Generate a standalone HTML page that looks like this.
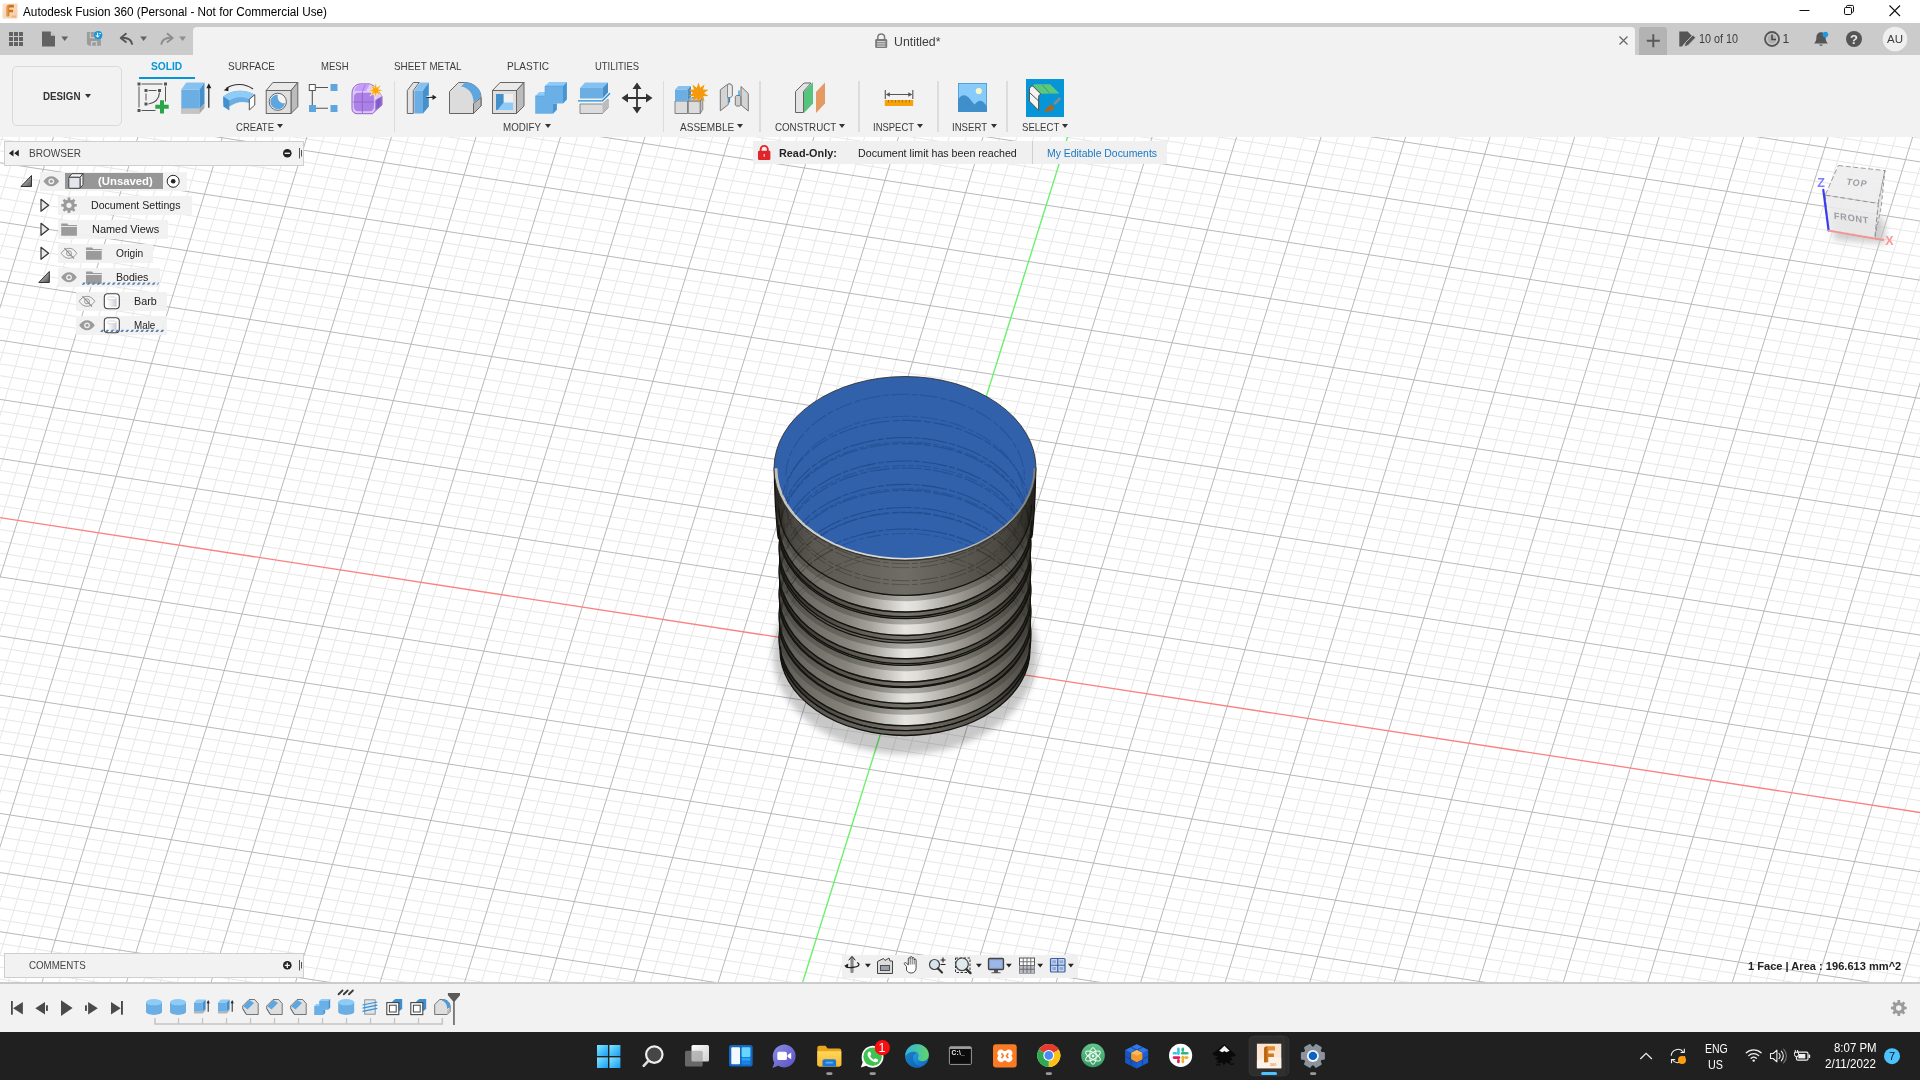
<!DOCTYPE html>
<html lang="en"><head><meta charset="utf-8"><title>Autodesk Fusion 360 (Personal - Not for Commercial Use)</title>
<style>
*{box-sizing:border-box;margin:0;padding:0}
html,body{width:1920px;height:1080px;overflow:hidden;background:#fff}
body{position:relative;font-family:"Liberation Sans",Arial,sans-serif;font-size:11px;color:#3c3c3c}
.abs{position:absolute}
.t{position:absolute;white-space:nowrap;line-height:1;transform-origin:0 50%}
svg{position:absolute;overflow:visible}
#titlebar{left:0;top:0;width:1920px;height:23px;background:#fff}
#tabstrip{left:0;top:23px;width:1920px;height:32px;background:#cbcbcb}
#doctab{left:193px;top:27px;width:1442px;height:28px;background:#f2f2f2;border-radius:4px 4px 0 0}
#toolbar{left:0;top:55px;width:1920px;height:82px;background:#f2f2f2}
#viewport{left:0;top:137px;width:1920px;height:845px;background:#fff;overflow:hidden}
#timeline{left:0;top:982px;width:1920px;height:50px;background:#f2f2f2;border-top:2px solid #cbcbcb}
#taskbar{left:0;top:1032px;width:1920px;height:48px;background:#202020}
.sep{position:absolute;top:81px;width:1.5px;height:51px;background:#dcdcdc}
.tab{font-size:11px;color:#3c3c3c;top:61px}
.grp{font-size:11px;color:#3c3c3c;top:121px}
.dd{position:absolute;width:0;height:0;border-left:3.5px solid transparent;border-right:3.5px solid transparent;border-top:4px solid #333}
.rowbg{position:absolute;height:19px;background:rgba(241,241,241,.92)}
.row{font-size:11px;color:#222}
</style></head>
<body>
<div id="viewport" class="abs">
<svg width="1920" height="846" viewBox="0 137 1920 846" style="left:0;top:0">
<path d="M-558.72 1011.56L2102.09 1420.13M-555.18 1000.27L2105.63 1408.84M-551.64 988.98L2109.17 1397.56M-548.10 977.70L2112.70 1386.27M-541.03 955.12L2119.78 1363.70M-537.49 943.84L2123.32 1352.41M-533.95 932.55L2126.85 1341.12M-530.41 921.26L2130.39 1329.84M-523.34 898.69L2137.47 1307.26M-519.80 887.40L2141.00 1295.98M-516.26 876.12L2144.54 1284.69M-512.73 864.83L2148.08 1273.40M-505.65 842.26L2155.16 1250.83M-502.11 830.97L2158.69 1239.54M-498.58 819.68L2162.23 1228.25M-495.04 808.39L2165.77 1216.97M-487.96 785.82L2172.84 1194.39M-484.43 774.53L2176.38 1183.11M-480.89 763.25L2179.92 1171.82M-477.35 751.96L2183.46 1160.53M-470.28 729.39L2190.53 1137.96M-466.74 718.10L2194.07 1126.67M-463.20 706.81L2197.61 1115.39M-459.66 695.53L2201.14 1104.10M-452.59 672.95L2208.22 1081.53M-449.05 661.67L2211.76 1070.24M-445.51 650.38L2215.29 1058.95M-441.97 639.09L2218.83 1047.67M-434.90 616.52L2225.91 1025.09M-431.36 605.23L2229.44 1013.81M-427.82 593.95L2232.98 1002.52M-424.29 582.66L2236.52 991.23M-417.21 560.09L2243.60 968.66M-413.67 548.80L2247.13 957.37M-410.14 537.51L2250.67 946.08M-406.60 526.22L2254.21 934.80M-399.52 503.65L2261.28 912.22M-395.99 492.36L2264.82 900.94M-392.45 481.08L2268.36 889.65M-388.91 469.79L2271.90 878.36M-381.84 447.22L2278.97 855.79M-378.30 435.93L2282.51 844.50M-374.76 424.64L2286.05 833.22M-371.22 413.36L2289.58 821.93M-364.15 390.78L2296.66 799.36M-360.61 379.50L2300.20 788.07M-357.07 368.21L2303.73 776.78M-353.53 356.92L2307.27 765.50M-346.46 334.35L2314.35 742.92M-342.92 323.06L2317.88 731.64M-339.38 311.78L2321.42 720.35M-335.85 300.49L2324.96 709.06M-328.77 277.92L2332.04 686.49M-325.23 266.63L2335.57 675.20M-321.70 255.34L2339.11 663.91M-318.16 244.05L2342.65 652.63M-311.08 221.48L2349.72 630.05M-307.55 210.19L2353.26 618.77M-304.01 198.91L2356.80 607.48M-300.47 187.62L2360.34 596.19M-293.40 165.05L2367.41 573.62M-289.86 153.76L2370.95 562.33M-286.32 142.47L2374.49 551.05M-282.78 131.19L2378.02 539.76M-275.71 108.61L2385.10 517.19M-272.17 97.33L2388.64 505.90M-268.63 86.04L2392.17 494.61M-265.09 74.75L2395.71 483.33M-258.02 52.18L2402.79 460.75M-254.48 40.89L2406.32 449.47M-250.94 29.61L2409.86 438.18M-247.41 18.32L2413.40 426.89M-240.33 -4.25L2420.48 404.32M-236.79 -15.54L2424.01 393.03M-233.26 -26.83L2427.55 381.74M-229.72 -38.12L2431.09 370.46M-222.64 -60.69L2438.16 347.88M-219.11 -71.98L2441.70 336.60M-215.57 -83.26L2445.24 325.31M-212.03 -94.55L2448.78 314.02M-204.96 -117.12L2455.85 291.45M-201.42 -128.41L2459.39 280.16M-197.88 -139.70L2462.93 268.88M-194.34 -150.98L2466.46 257.59M-187.27 -173.56L2473.54 235.02M-183.73 -184.84L2477.08 223.73M-180.19 -196.13L2480.61 212.44M-176.65 -207.42L2484.15 201.16M-169.58 -229.99L2491.23 178.58M-166.04 -241.28L2494.76 167.30M-162.50 -252.56L2498.30 156.01M-158.97 -263.85L2501.84 144.72M-546.13 1025.32L-139.30 -272.66M-530.00 1027.80L-123.18 -270.19M-513.87 1030.27L-107.05 -267.71M-497.75 1032.75L-90.92 -265.23M-465.50 1037.70L-58.67 -260.28M-449.37 1040.18L-42.55 -257.80M-433.24 1042.65L-26.42 -255.33M-417.12 1045.13L-10.29 -252.85M-384.87 1050.08L21.96 -247.90M-368.74 1052.56L38.08 -245.42M-352.61 1055.03L54.21 -242.95M-336.49 1057.51L70.34 -240.47M-304.24 1062.46L102.59 -235.52M-288.11 1064.94L118.71 -233.04M-271.98 1067.42L134.84 -230.57M-255.86 1069.89L150.97 -228.09M-223.60 1074.84L183.22 -223.14M-207.48 1077.32L199.35 -220.66M-191.35 1079.80L215.47 -218.19M-175.23 1082.27L231.60 -215.71M-142.97 1087.23L263.85 -210.76M-126.85 1089.70L279.98 -208.28M-110.72 1092.18L296.10 -205.80M-94.60 1094.65L312.23 -203.33M-62.34 1099.61L344.48 -198.38M-46.22 1102.08L360.61 -195.90M-30.09 1104.56L376.73 -193.42M-13.97 1107.03L392.86 -190.95M18.29 1111.99L425.11 -185.99M34.41 1114.46L441.24 -183.52M50.54 1116.94L457.36 -181.04M66.66 1119.42L473.49 -178.57M98.92 1124.37L505.74 -173.61M115.04 1126.84L521.87 -171.14M131.17 1129.32L537.99 -168.66M147.30 1131.80L554.12 -166.19M179.55 1136.75L586.37 -161.23M195.67 1139.23L602.50 -158.76M211.80 1141.70L618.62 -156.28M227.93 1144.18L634.75 -153.80M260.18 1149.13L667.00 -148.85M276.30 1151.61L683.13 -146.38M292.43 1154.08L699.25 -143.90M308.56 1156.56L715.38 -141.42M340.81 1161.51L747.63 -136.47M356.93 1163.99L763.76 -133.99M373.06 1166.46L779.88 -131.52M389.19 1168.94L796.01 -129.04M421.44 1173.89L828.26 -124.09M437.57 1176.37L844.39 -121.61M453.69 1178.84L860.52 -119.14M469.82 1181.32L876.64 -116.66M502.07 1186.27L908.89 -111.71M518.20 1188.75L925.02 -109.23M534.32 1191.23L941.15 -106.76M550.45 1193.70L957.27 -104.28M582.70 1198.65L989.52 -99.33M598.83 1201.13L1005.65 -96.85M614.95 1203.61L1021.78 -94.38M631.08 1206.08L1037.90 -91.90M663.33 1211.04L1070.15 -86.95M679.46 1213.51L1086.28 -84.47M695.58 1215.99L1102.41 -81.99M711.71 1218.46L1118.53 -79.52M743.96 1223.42L1150.79 -74.57M760.09 1225.89L1166.91 -72.09M776.21 1228.37L1183.04 -69.61M792.34 1230.84L1199.16 -67.14M824.59 1235.80L1231.42 -62.18M840.72 1238.27L1247.54 -59.71M856.84 1240.75L1263.67 -57.23M872.97 1243.23L1279.79 -54.76M905.22 1248.18L1312.05 -49.80M921.35 1250.65L1328.17 -47.33M937.47 1253.13L1344.30 -44.85M953.60 1255.61L1360.42 -42.38M985.85 1260.56L1392.68 -37.42M1001.98 1263.04L1408.80 -34.95M1018.10 1265.51L1424.93 -32.47M1034.23 1267.99L1441.05 -29.99M1066.48 1272.94L1473.31 -25.04M1082.61 1275.42L1489.43 -22.57M1098.74 1277.89L1505.56 -20.09M1114.86 1280.37L1521.69 -17.61M1147.11 1285.32L1553.94 -12.66M1163.24 1287.80L1570.06 -10.18M1179.37 1290.27L1586.19 -7.71M1195.49 1292.75L1602.32 -5.23M1227.74 1297.70L1634.57 -0.28M1243.87 1300.18L1650.69 2.20M1260.00 1302.65L1666.82 4.67M1276.12 1305.13L1682.95 7.15M1308.37 1310.08L1715.20 12.10M1324.50 1312.56L1731.32 14.58M1340.63 1315.04L1747.45 17.05M1356.75 1317.51L1763.58 19.53M1389.01 1322.46L1795.83 24.48M1405.13 1324.94L1811.96 26.96M1421.26 1327.42L1828.08 29.43M1437.38 1329.89L1844.21 31.91M1469.64 1334.85L1876.46 36.86M1485.76 1337.32L1892.59 39.34M1501.89 1339.80L1908.71 41.82M1518.01 1342.27L1924.84 44.29M1550.27 1347.23L1957.09 49.24M1566.39 1349.70L1973.22 51.72M1582.52 1352.18L1989.34 54.20M1598.64 1354.65L2005.47 56.67M1630.90 1359.61L2037.72 61.63M1647.02 1362.08L2053.85 64.10M1663.15 1364.56L2069.97 66.58M1679.27 1367.04L2086.10 69.05M1711.53 1371.99L2118.35 74.01M1727.65 1374.46L2134.48 76.48M1743.78 1376.94L2150.60 78.96M1759.91 1379.42L2166.73 81.43M1792.16 1384.37L2198.98 86.39M1808.28 1386.85L2215.11 88.86M1824.41 1389.32L2231.23 91.34M1840.54 1391.80L2247.36 93.82M1872.79 1396.75L2279.61 98.77M1888.91 1399.23L2295.74 101.24M1905.04 1401.70L2311.86 103.72M1921.17 1404.18L2327.99 106.20M1953.42 1409.13L2360.24 111.15M1969.54 1411.61L2376.37 113.63M1985.67 1414.08L2392.49 116.10M2001.80 1416.56L2408.62 118.58M2034.05 1421.51L2440.87 123.53M2050.18 1423.99L2457.00 126.01M2066.30 1426.46L2473.13 128.48M2082.43 1428.94L2489.25 130.96" stroke="#e7e7e7" stroke-width="1" fill="none"/>
<path d="M-562.25 1022.84L2098.55 1431.42M-544.56 966.41L2116.24 1374.98M-526.88 909.98L2133.93 1318.55M-509.19 853.54L2151.62 1262.12M-491.50 797.11L2169.31 1205.68M-473.81 740.67L2186.99 1149.25M-456.12 684.24L2204.68 1092.81M-438.44 627.81L2222.37 1036.38M-420.75 571.37L2240.06 979.94M-403.06 514.94L2257.75 923.51M-367.68 402.07L2293.12 810.64M-350.00 345.64L2310.81 754.21M-332.31 289.20L2328.50 697.77M-314.62 232.77L2346.19 641.34M-296.93 176.33L2363.87 584.91M-279.24 119.90L2381.56 528.47M-261.56 63.47L2399.25 472.04M-243.87 7.03L2416.94 415.61M-226.18 -49.40L2434.63 359.17M-208.49 -105.84L2452.31 302.74M-190.80 -162.27L2470.00 246.30M-173.12 -218.70L2487.69 189.87M-155.43 -275.14L2505.38 133.44M-562.25 1022.84L-155.43 -275.14M-481.62 1035.22L-74.80 -262.76M-400.99 1047.61L5.83 -250.38M-320.36 1059.99L86.46 -237.99M-239.73 1072.37L167.09 -225.61M-159.10 1084.75L247.72 -213.23M-78.47 1097.13L328.35 -200.85M2.16 1109.51L408.98 -188.47M82.79 1121.89L489.62 -176.09M163.42 1134.27L570.25 -163.71M244.05 1146.65L650.88 -151.33M324.68 1159.03L731.51 -138.95M405.31 1171.42L812.14 -126.57M485.94 1183.80L892.77 -114.18M566.57 1196.18L973.40 -101.80M647.20 1208.56L1054.03 -89.42M808.47 1233.32L1215.29 -64.66M889.10 1245.70L1295.92 -52.28M969.73 1258.08L1376.55 -39.90M1050.36 1270.46L1457.18 -27.52M1130.99 1282.84L1537.81 -15.14M1211.62 1295.23L1618.44 -2.76M1292.25 1307.61L1699.07 9.63M1372.88 1319.99L1779.70 22.01M1453.51 1332.37L1860.33 34.39M1534.14 1344.75L1940.96 46.77M1614.77 1357.13L2021.59 59.15M1695.40 1369.51L2102.22 71.53M1776.03 1381.89L2182.86 83.91M1856.66 1394.27L2263.49 96.29M1937.29 1406.65L2344.12 108.67M2017.92 1419.04L2424.75 121.05M2098.55 1431.42L2505.38 133.44" stroke="#b9b9b9" stroke-width="1" fill="none"/>
<path d="M-385.37 458.50L2275.43 867.08" stroke="#fb8282" stroke-width="1.3" fill="none"/>
<path d="M727.84 1220.94L1134.66 -77.04" stroke="#6cf06c" stroke-width="1.4" fill="none"/>

<defs><filter id="shb" x="-20%" y="-20%" width="140%" height="140%"><feGaussianBlur stdDeviation="3"/></filter></defs><ellipse cx="905.5" cy="653.2" rx="132.5" ry="100.9" fill="#c8c8c8" filter="url(#shb)" style="mix-blend-mode:multiply"/>
<defs>
<linearGradient id="bodyg" gradientUnits="userSpaceOnUse" x1="778.6" y1="0" x2="1031.4" y2="0">
<stop offset="0" stop-color="#2a2924"/><stop offset=".03" stop-color="#45433d"/><stop offset=".14" stop-color="#5a5851"/><stop offset=".34" stop-color="#65635b"/><stop offset=".5" stop-color="#6f6d65"/><stop offset=".68" stop-color="#5f5d55"/><stop offset=".86" stop-color="#4d4b44"/><stop offset=".96" stop-color="#3a3832"/><stop offset="1" stop-color="#24231f"/></linearGradient>
<linearGradient id="bandg" gradientUnits="userSpaceOnUse" x1="778.6" y1="0" x2="1031.4" y2="0">
<stop offset="0" stop-color="#504e48"/><stop offset=".05" stop-color="#64625c"/><stop offset=".16" stop-color="#75736c"/><stop offset=".27" stop-color="#85837c"/><stop offset=".36" stop-color="#a3a19a"/><stop offset=".45" stop-color="#cfcdc7"/><stop offset=".5" stop-color="#e6e5e1"/><stop offset=".55" stop-color="#dddcd7"/><stop offset=".62" stop-color="#bfbdb7"/><stop offset=".72" stop-color="#9a9891"/><stop offset=".82" stop-color="#78766f"/><stop offset=".92" stop-color="#5d5b54"/><stop offset="1" stop-color="#454440"/></linearGradient>
<linearGradient id="grvg" gradientUnits="userSpaceOnUse" x1="778.6" y1="0" x2="1031.4" y2="0">
<stop offset="0" stop-color="#2b2a26"/><stop offset=".2" stop-color="#4f4d47"/><stop offset=".5" stop-color="#77756d"/><stop offset=".8" stop-color="#4f4d47"/><stop offset="1" stop-color="#2b2a26"/></linearGradient>
<linearGradient id="rimg" gradientUnits="userSpaceOnUse" x1="774" y1="0" x2="1036" y2="0">
<stop offset="0" stop-color="#c2c0b9"/><stop offset=".25" stop-color="#d6d4cd"/><stop offset=".55" stop-color="#e2e0da"/><stop offset=".85" stop-color="#a5a39c"/><stop offset="1" stop-color="#7e7c75"/></linearGradient>
<linearGradient id="bshade" x1="0" y1="0" x2="0" y2="1"><stop offset="0" stop-color="#000" stop-opacity=".16"/><stop offset="1" stop-color="#000" stop-opacity="0"/></linearGradient>
<clipPath id="bodyclip"><path d="M774.30 468.30 L774.30 468.30 Q774.90 498.30 775.75 510.30 Q776.60 522.30 777.40 531.30 Q778.20 540.30 779.15 538.45 Q780.10 536.60 779.35 542.10 Q778.60 547.60 779.35 553.80 Q780.10 560.00 779.35 565.50 Q778.60 571.00 779.35 577.10 Q780.10 583.20 779.35 588.70 Q778.60 594.20 779.35 599.40 Q780.10 604.60 779.35 610.10 Q778.60 615.60 779.35 621.30 Q780.10 627.00 779.35 632.50 Q778.60 638.00 779.30 644.00 L780.00 650.00 A125 85.5 0 0 0 1030.00 650.00 L1030.00 650.00 Q1031.40 634.00 1030.65 628.50 Q1029.90 623.00 1030.65 617.30 Q1031.40 611.60 1030.65 606.10 Q1029.90 600.60 1030.65 595.40 Q1031.40 590.20 1030.65 584.70 Q1029.90 579.20 1030.65 573.10 Q1031.40 567.00 1030.65 561.50 Q1029.90 556.00 1030.65 549.80 Q1031.40 543.60 1030.65 538.10 Q1029.90 532.60 1030.85 536.45 Q1031.80 540.30 1032.60 531.30 Q1033.40 522.30 1034.25 510.30 Q1035.10 498.30 1035.40 483.30 L1035.70 468.30 Z"/></clipPath>
<clipPath id="topclip"><ellipse cx="905" cy="468.3" rx="128.1" ry="89.7"/></clipPath>
</defs>
<path d="M774.30 468.30 L774.30 468.30 Q774.90 498.30 775.75 510.30 Q776.60 522.30 777.40 531.30 Q778.20 540.30 779.15 538.45 Q780.10 536.60 779.35 542.10 Q778.60 547.60 779.35 553.80 Q780.10 560.00 779.35 565.50 Q778.60 571.00 779.35 577.10 Q780.10 583.20 779.35 588.70 Q778.60 594.20 779.35 599.40 Q780.10 604.60 779.35 610.10 Q778.60 615.60 779.35 621.30 Q780.10 627.00 779.35 632.50 Q778.60 638.00 779.30 644.00 L780.00 650.00 A125 85.5 0 0 0 1030.00 650.00 L1030.00 650.00 Q1031.40 634.00 1030.65 628.50 Q1029.90 623.00 1030.65 617.30 Q1031.40 611.60 1030.65 606.10 Q1029.90 600.60 1030.65 595.40 Q1031.40 590.20 1030.65 584.70 Q1029.90 579.20 1030.65 573.10 Q1031.40 567.00 1030.65 561.50 Q1029.90 556.00 1030.65 549.80 Q1031.40 543.60 1030.65 538.10 Q1029.90 532.60 1030.85 536.45 Q1031.80 540.30 1032.60 531.30 Q1033.40 522.30 1034.25 510.30 Q1035.10 498.30 1035.40 483.30 L1035.70 468.30 Z" fill="url(#bodyg)"/>
<g clip-path="url(#bodyclip)">
<path d="M778.6 525.2 A126 88.9 0 0 0 1031.4 521.2 V525.4 A126 88.9 0 0 1 778.6 529.4 Z" fill="url(#grvg)"/>
<path d="M778.6 509 A126 88.4 0 0 0 1031.4 505 V520.2 A126 88.9 0 0 1 778.6 524.2 Z" fill="url(#bandg)"/>
<path d="M778.6 511.5 A126 88.4 0 0 0 1031.4 507.5" stroke="#2b2a26" stroke-opacity=".3" stroke-width="6" fill="none"/>
<path d="M778.6 508.7 A126 88.4 0 0 0 1031.4 504.7" stroke="#14130f" stroke-width="1.2" fill="none"/>
<path d="M778.6 524.8 A126 88.9 0 0 0 1031.4 520.8" stroke="#14130f" stroke-width="1.5" fill="none"/>
<path d="M778.6 529.6 A126 88.9 0 0 0 1031.4 525.6" stroke="#14130f" stroke-width="1.4" fill="none"/>
<path d="M778.6 548.6 A126 88.9 0 0 0 1031.4 544.6 V548.8 A126 88.9 0 0 1 778.6 552.8 Z" fill="url(#grvg)"/>
<path d="M778.6 532.3 A126 88.4 0 0 0 1031.4 528.3 V543.6 A126 88.9 0 0 1 778.6 547.6 Z" fill="url(#bandg)"/>
<path d="M778.6 534.8 A126 88.4 0 0 0 1031.4 530.8" stroke="#2b2a26" stroke-opacity=".3" stroke-width="6" fill="none"/>
<path d="M778.6 532 A126 88.4 0 0 0 1031.4 528" stroke="#14130f" stroke-width="1.2" fill="none"/>
<path d="M778.6 548.2 A126 88.9 0 0 0 1031.4 544.2" stroke="#14130f" stroke-width="1.5" fill="none"/>
<path d="M778.6 553 A126 88.9 0 0 0 1031.4 549" stroke="#14130f" stroke-width="1.4" fill="none"/>
<path d="M778.6 572 A126 88.9 0 0 0 1031.4 568 V572.2 A126 88.9 0 0 1 778.6 576.2 Z" fill="url(#grvg)"/>
<path d="M778.6 556.6 A126 88.4 0 0 0 1031.4 552.6 V567 A126 88.9 0 0 1 778.6 571 Z" fill="url(#bandg)"/>
<path d="M778.6 559.1 A126 88.4 0 0 0 1031.4 555.1" stroke="#2b2a26" stroke-opacity=".3" stroke-width="6" fill="none"/>
<path d="M778.6 556.3 A126 88.4 0 0 0 1031.4 552.3" stroke="#14130f" stroke-width="1.2" fill="none"/>
<path d="M778.6 571.6 A126 88.9 0 0 0 1031.4 567.6" stroke="#14130f" stroke-width="1.5" fill="none"/>
<path d="M778.6 576.4 A126 88.9 0 0 0 1031.4 572.4" stroke="#14130f" stroke-width="1.4" fill="none"/>
<path d="M778.6 595.2 A126 88.9 0 0 0 1031.4 591.2 V595.4 A126 88.9 0 0 1 778.6 599.4 Z" fill="url(#grvg)"/>
<path d="M778.6 579 A126 88.4 0 0 0 1031.4 575 V590.2 A126 88.9 0 0 1 778.6 594.2 Z" fill="url(#bandg)"/>
<path d="M778.6 581.5 A126 88.4 0 0 0 1031.4 577.5" stroke="#2b2a26" stroke-opacity=".3" stroke-width="6" fill="none"/>
<path d="M778.6 578.7 A126 88.4 0 0 0 1031.4 574.7" stroke="#14130f" stroke-width="1.2" fill="none"/>
<path d="M778.6 594.8 A126 88.9 0 0 0 1031.4 590.8" stroke="#14130f" stroke-width="1.5" fill="none"/>
<path d="M778.6 599.6 A126 88.9 0 0 0 1031.4 595.6" stroke="#14130f" stroke-width="1.4" fill="none"/>
<path d="M778.6 616.6 A126 88.9 0 0 0 1031.4 612.6 V616.8 A126 88.9 0 0 1 778.6 620.8 Z" fill="url(#grvg)"/>
<path d="M778.6 601.3 A126 88.4 0 0 0 1031.4 597.3 V611.6 A126 88.9 0 0 1 778.6 615.6 Z" fill="url(#bandg)"/>
<path d="M778.6 603.8 A126 88.4 0 0 0 1031.4 599.8" stroke="#2b2a26" stroke-opacity=".3" stroke-width="6" fill="none"/>
<path d="M778.6 601 A126 88.4 0 0 0 1031.4 597" stroke="#14130f" stroke-width="1.2" fill="none"/>
<path d="M778.6 616.2 A126 88.9 0 0 0 1031.4 612.2" stroke="#14130f" stroke-width="1.5" fill="none"/>
<path d="M778.6 621 A126 88.9 0 0 0 1031.4 617" stroke="#14130f" stroke-width="1.4" fill="none"/>
<path d="M778.6 639 A126 88.9 0 0 0 1031.4 635 V639.2 A126 88.9 0 0 1 778.6 643.2 Z" fill="url(#grvg)"/>
<path d="M778.6 622.6 A126 88.4 0 0 0 1031.4 618.6 V634 A126 88.9 0 0 1 778.6 638 Z" fill="url(#bandg)"/>
<path d="M778.6 625.1 A126 88.4 0 0 0 1031.4 621.1" stroke="#2b2a26" stroke-opacity=".3" stroke-width="6" fill="none"/>
<path d="M778.6 622.3 A126 88.4 0 0 0 1031.4 618.3" stroke="#14130f" stroke-width="1.2" fill="none"/>
<path d="M778.6 638.6 A126 88.9 0 0 0 1031.4 634.6" stroke="#14130f" stroke-width="1.5" fill="none"/>
<path d="M778.6 643.4 A126 88.9 0 0 0 1031.4 639.4" stroke="#14130f" stroke-width="1.4" fill="none"/>
<path d="M780.6 504 A124 85.4 0 0 1 1029.4 508" stroke="#15140f" stroke-width=".8" fill="none" opacity="0.42" stroke-dasharray="22 2.500 7 2.500"/>
<path d="M780.6 521.2 A124 85.4 0 0 1 1029.4 525.2" stroke="#15140f" stroke-width=".8" fill="none" opacity="0.32" stroke-dasharray="22 2.500 7 2.500"/>
<path d="M780.6 525.7 A124 85.4 0 0 1 1029.4 529.7" stroke="#15140f" stroke-width=".8" fill="none" opacity="0.25" stroke-dasharray="22 2.500 7 2.500"/>
<path d="M780.6 527.3 A124 85.4 0 0 1 1029.4 531.3" stroke="#15140f" stroke-width=".8" fill="none" opacity="0.42" stroke-dasharray="22 2.500 7 2.500"/>
<path d="M780.6 544.6 A124 85.4 0 0 1 1029.4 548.6" stroke="#15140f" stroke-width=".8" fill="none" opacity="0.32" stroke-dasharray="22 2.500 7 2.500"/>
<path d="M780.6 549.1 A124 85.4 0 0 1 1029.4 553.1" stroke="#15140f" stroke-width=".8" fill="none" opacity="0.25" stroke-dasharray="22 2.500 7 2.500"/>
<path d="M780.6 551.6 A124 85.4 0 0 1 1029.4 555.6" stroke="#15140f" stroke-width=".8" fill="none" opacity="0.42" stroke-dasharray="22 2.500 7 2.500"/>
<path d="M780.6 568 A124 85.4 0 0 1 1029.4 572" stroke="#15140f" stroke-width=".8" fill="none" opacity="0.32" stroke-dasharray="22 2.500 7 2.500"/>
<path d="M780.6 572.5 A124 85.4 0 0 1 1029.4 576.5" stroke="#15140f" stroke-width=".8" fill="none" opacity="0.25" stroke-dasharray="22 2.500 7 2.500"/>
<path d="M780.6 574 A124 85.4 0 0 1 1029.4 578" stroke="#15140f" stroke-width=".8" fill="none" opacity="0.42" stroke-dasharray="22 2.500 7 2.500"/>
<path d="M780.6 591.2 A124 85.4 0 0 1 1029.4 595.2" stroke="#15140f" stroke-width=".8" fill="none" opacity="0.32" stroke-dasharray="22 2.500 7 2.500"/>
<path d="M780.6 595.7 A124 85.4 0 0 1 1029.4 599.7" stroke="#15140f" stroke-width=".8" fill="none" opacity="0.25" stroke-dasharray="22 2.500 7 2.500"/>
<path d="M780.6 596.3 A124 85.4 0 0 1 1029.4 600.3" stroke="#15140f" stroke-width=".8" fill="none" opacity="0.42" stroke-dasharray="22 2.500 7 2.500"/>
<path d="M780.6 612.6 A124 85.4 0 0 1 1029.4 616.6" stroke="#15140f" stroke-width=".8" fill="none" opacity="0.32" stroke-dasharray="22 2.500 7 2.500"/>
<path d="M780.6 617.1 A124 85.4 0 0 1 1029.4 621.1" stroke="#15140f" stroke-width=".8" fill="none" opacity="0.25" stroke-dasharray="22 2.500 7 2.500"/>
<path d="M780.6 617.6 A124 85.4 0 0 1 1029.4 621.6" stroke="#15140f" stroke-width=".8" fill="none" opacity="0.42" stroke-dasharray="22 2.500 7 2.500"/>
<path d="M780.6 635 A124 85.4 0 0 1 1029.4 639" stroke="#15140f" stroke-width=".8" fill="none" opacity="0.32" stroke-dasharray="22 2.500 7 2.500"/>
<path d="M780.6 639.5 A124 85.4 0 0 1 1029.4 643.5" stroke="#15140f" stroke-width=".8" fill="none" opacity="0.25" stroke-dasharray="22 2.500 7 2.500"/>
<path d="M785.6 482 A119 83.4 0 0 0 1024.4 478" stroke="#15140f" stroke-width=".8" fill="none" opacity="0.4" stroke-dasharray="18 2.500 6 2.500"/>
<path d="M785.6 486 A119 83.4 0 0 0 1024.4 482" stroke="#15140f" stroke-width=".8" fill="none" opacity="0.35" stroke-dasharray="18 2.500 6 2.500"/>
<path d="M785.6 499 A119 83.4 0 0 0 1024.4 495" stroke="#15140f" stroke-width=".8" fill="none" opacity="0.4" stroke-dasharray="18 2.500 6 2.500"/>
<path d="M785.6 503 A119 83.4 0 0 0 1024.4 499" stroke="#15140f" stroke-width=".8" fill="none" opacity="0.35" stroke-dasharray="18 2.500 6 2.500"/>
</g>
<path d="M774.30 468.30 L774.30 468.30 Q774.90 498.30 775.75 510.30 Q776.60 522.30 777.40 531.30 Q778.20 540.30 779.15 538.45 Q780.10 536.60 779.35 542.10 Q778.60 547.60 779.35 553.80 Q780.10 560.00 779.35 565.50 Q778.60 571.00 779.35 577.10 Q780.10 583.20 779.35 588.70 Q778.60 594.20 779.35 599.40 Q780.10 604.60 779.35 610.10 Q778.60 615.60 779.35 621.30 Q780.10 627.00 779.35 632.50 Q778.60 638.00 779.30 644.00 L780.00 650.00 A125 85.5 0 0 0 1030.00 650.00 L1030.00 650.00 Q1031.40 634.00 1030.65 628.50 Q1029.90 623.00 1030.65 617.30 Q1031.40 611.60 1030.65 606.10 Q1029.90 600.60 1030.65 595.40 Q1031.40 590.20 1030.65 584.70 Q1029.90 579.20 1030.65 573.10 Q1031.40 567.00 1030.65 561.50 Q1029.90 556.00 1030.65 549.80 Q1031.40 543.60 1030.65 538.10 Q1029.90 532.60 1030.85 536.45 Q1031.80 540.30 1032.60 531.30 Q1033.40 522.30 1034.25 510.30 Q1035.10 498.30 1035.40 483.30 L1035.70 468.30 Z" stroke="#12110e" stroke-width="1.3" fill="none"/>
<path d="M780.5 646.5 A124.5 85.5 0 0 0 1029.5 643.5" stroke="#12110e" stroke-width="1" fill="none"/>
<ellipse cx="905" cy="469.5" rx="129.5" ry="91.8" fill="#45433d"/>
<ellipse cx="905" cy="468.3" rx="131" ry="91.8" fill="#3161ab"/>
<path d="M774 468.3 A131 91.8 0 0 0 1036 468.3 L1033.6 468.3 A128.1 89.7 0 0 1 777.4 468.3 Z" fill="url(#rimg)"/>
<ellipse cx="905" cy="468.3" rx="131" ry="91.8" fill="none" stroke="#23221e" stroke-width=".8"/>
<g clip-path="url(#topclip)" fill="none" stroke="#1f4a8c" stroke-width="1.1">
<path d="M781.6 504 A123 85.4 0 0 1 1028.4 508" opacity="0.75" stroke-dasharray="20 2.500 7 2.500"/>
<path d="M781.6 521.2 A123 85.4 0 0 1 1028.4 525.2" opacity="0.9" stroke-dasharray="26 2 6 2"/>
<path d="M781.6 525.7 A123 85.4 0 0 1 1028.4 529.7" opacity="0.6" stroke-dasharray="14 3 5 3"/>
<path d="M781.6 527.3 A123 85.4 0 0 1 1028.4 531.3" opacity="0.75" stroke-dasharray="20 2.500 7 2.500"/>
<path d="M781.6 544.6 A123 85.4 0 0 1 1028.4 548.6" opacity="0.9" stroke-dasharray="26 2 6 2"/>
<path d="M781.6 549.1 A123 85.4 0 0 1 1028.4 553.1" opacity="0.6" stroke-dasharray="14 3 5 3"/>
<path d="M781.6 551.6 A123 85.4 0 0 1 1028.4 555.6" opacity="0.75" stroke-dasharray="20 2.500 7 2.500"/>
<path d="M781.6 568 A123 85.4 0 0 1 1028.4 572" opacity="0.9" stroke-dasharray="26 2 6 2"/>
<path d="M781.6 572.5 A123 85.4 0 0 1 1028.4 576.5" opacity="0.6" stroke-dasharray="14 3 5 3"/>
<path d="M781.6 574 A123 85.4 0 0 1 1028.4 578" opacity="0.75" stroke-dasharray="20 2.500 7 2.500"/>
<path d="M781.6 591.2 A123 85.4 0 0 1 1028.4 595.2" opacity="0.9" stroke-dasharray="26 2 6 2"/>
<path d="M781.6 595.7 A123 85.4 0 0 1 1028.4 599.7" opacity="0.6" stroke-dasharray="14 3 5 3"/>
<path d="M781.6 596.3 A123 85.4 0 0 1 1028.4 600.3" opacity="0.75" stroke-dasharray="20 2.500 7 2.500"/>
<path d="M781.6 612.6 A123 85.4 0 0 1 1028.4 616.6" opacity="0.9" stroke-dasharray="26 2 6 2"/>
<path d="M781.6 617.1 A123 85.4 0 0 1 1028.4 621.1" opacity="0.6" stroke-dasharray="14 3 5 3"/>
<path d="M785.6 476 A119 83.4 0 0 1 1024.4 480" opacity="0.6" stroke-dasharray="18 2.500 6 2.500"/>
<path d="M785.6 498 A119 83.4 0 0 1 1024.4 502" opacity="0.55" stroke-dasharray="18 2.500 6 2.500"/>
</g>
</svg>
</div>
<div id="titlebar" class="abs"></div>
<div id="tabstrip" class="abs"></div>
<div id="doctab" class="abs"></div>
<div id="toolbar" class="abs"></div>
<svg width="16" height="16" viewBox="0 0 16 16" style="left:2px;top:3px">
<defs><linearGradient id="fg" x1="0" y1="0" x2="1" y2="1"><stop offset="0" stop-color="#fae3cf"/><stop offset="1" stop-color="#f5cba6"/></linearGradient></defs>
<rect x="0.5" y="0.5" width="15" height="15" rx="1" fill="url(#fg)"/>
<path d="M4.600 13.300V4.200c0-1.500.8-2.400 2.300-2.400h5v2.600H8c-.5 0-.7.200-.7.700v1.700h3.800v2.500H7.300v4z" fill="#cf7016"/><path d="M4.600 13.300V4.200c0-1.500.8-2.400 2.300-2.400h1.200c-1 0-1.600.8-1.600 2v9.500z" fill="#e89a4a"/><rect x="9.500" y="12.600" width="4.500" height="1.800" fill="#f2b27a"/>
</svg><div class="t" style="left:23.00px;top:6.10px;font-size:12px;transform:scaleX(0.9803);color:#000;">Autodesk Fusion 360 (Personal - Not for Commercial Use)</div>
<svg width="140" height="23" viewBox="1780 0 140 23" style="left:1780px;top:0">
<path d="M1799.5 10.500h10" stroke="#111" stroke-width="1" fill="none"/>
<rect x="1844.5" y="7.5" width="7" height="7" rx="1.2" stroke="#111" fill="none"/>
<path d="M1846.5 7.3V6.600a1.200 1.200 0 0 1 1.200-1.200h4.600a1.200 1.200 0 0 1 1.200 1.200v4.600a1.200 1.200 0 0 1-1.200 1.200h-.7" stroke="#111" fill="none"/>
<path d="M1889.5 5.5l10.5 10.5M1900 5.5l-10.5 10.5" stroke="#111" stroke-width="1.1" fill="none"/>
</svg><svg width="193" height="32" viewBox="0 23 193 32" style="left:0;top:23px">
<g fill="#626262">
<rect x="9" y="32" width="4" height="4"/><rect x="14" y="32" width="4" height="4"/><rect x="19" y="32" width="4" height="4"/>
<rect x="9" y="37" width="4" height="4"/><rect x="14" y="37" width="4" height="4"/><rect x="19" y="37" width="4" height="4"/>
<rect x="9" y="42" width="4" height="4"/><rect x="14" y="42" width="4" height="4"/><rect x="19" y="42" width="4" height="4"/>
<path d="M42 31.5h8.5l4.5 4.5v10.5h-13z"/>
<path d="M61.3 36.5h6.8l-3.4 4.6z"/>
<path d="M140.2 36.5h6.8l-3.4 4.6z"/>
</g>
<path d="M50.8 31.5v4.2h4.2" fill="#c9c9c9"/>
<!-- save (disabled) -->
<path d="M86.900 31.900h14v13.800h-11.800l-2.200-1.600z" fill="#9b9b9b"/>
<path d="M90.300 32.600v5h4.700" stroke="#cbcbcb" stroke-width="1.100" fill="none"/>
<path d="M91.600 45.700v-4.100h4.900v4.100" stroke="#cbcbcb" stroke-width="1.300" fill="none"/>
<circle cx="98.200" cy="35.200" r="4.100" fill="#1596dd"/><path d="M97.600 32.600v4.600M95.900 35.200l1.700 2 1.700-2M99.300 33.500h1.600" stroke="#fff" stroke-width="1" fill="none"/>
<!-- undo -->
<path d="M125.900 33.800l-5.200 4.100 5.200 4" stroke="#555" stroke-width="1.900" fill="none" stroke-linecap="round" stroke-linejoin="round"/>
<path d="M121.200 37.900c5.500-.4 10.200 1 11 6.800" stroke="#555" stroke-width="2" fill="none" stroke-linecap="butt"/>
<!-- redo (disabled) -->
<path d="M167.500 33.800l5.200 4.100-5.200 4" stroke="#8e8e8e" stroke-width="1.900" fill="none" stroke-linecap="round" stroke-linejoin="round"/>
<path d="M172.200 37.900c-5.500-.4-10.200 1-11 6.800" stroke="#8e8e8e" stroke-width="2" fill="none" stroke-linecap="butt"/>
<path d="M179.200 36.500h6.800l-3.400 4.600z" fill="#8e8e8e"/>
</svg><svg width="16" height="18" viewBox="873 32 16 18" style="left:873px;top:32px">
<rect x="875.2" y="39" width="12" height="9" rx="1.3" fill="#7a7a7a"/>
<path d="M877.8 39.5v-2.2a3.4 3.4 0 0 1 6.8 0v2.2" stroke="#7a7a7a" stroke-width="1.5" fill="none"/>
<rect x="877" y="41.2" width="8.4" height="1" fill="#e8e8e8"/><rect x="877" y="43.4" width="8.4" height="1" fill="#e8e8e8"/><rect x="877" y="45.6" width="8.4" height="1" fill="#e8e8e8"/>
</svg><div class="t" style="left:894.00px;top:36.20px;font-size:12px;transform:scaleX(1.0252);color:#3c3c3c;">Untitled*</div>
<svg width="300" height="32" viewBox="1615 23 300 32" style="left:1615px;top:23px">
<path d="M1619.5 36.5l8 8M1627.5 36.5l-8 8" stroke="#666" stroke-width="1.2" fill="none"/>
<rect x="1639" y="27" width="28" height="28" rx="3" fill="#b3b3b3"/><rect x="1639" y="50" width="28" height="5" fill="#b3b3b3"/>
<path d="M1653.3 34.3v13M1646.8 40.8h13" stroke="#5a5a5a" stroke-width="2" fill="none"/>
<!-- extensions doc icon -->
<path d="M1679.3 31.5h8.3l4.2 4.2-9 9.6-0.6 1.2h-2.9z" fill="#555"/>
<path d="M1684.3 46.8l1-4 7.6-7.8 2.7 2.7-7.6 7.8z" fill="#555" stroke="#c9c9c9" stroke-width=".8"/>
<!-- clock -->
<circle cx="1772" cy="39" r="7" fill="none" stroke="#555" stroke-width="1.8"/><circle cx="1772" cy="39" r="4.6" fill="#777" opacity=".35"/>
<path d="M1772 34.6v4.8h4" stroke="#444" stroke-width="1.5" fill="none"/>
<!-- bell -->
<path d="M1821 32.2c-3.3 0-4.6 2.6-4.6 5.4 0 3-.9 4.6-2.2 5.9h13.6c-1.3-1.3-2.2-2.9-2.2-5.9 0-2.8-1.3-5.4-4.6-5.4z" fill="#555"/>
<path d="M1819.2 44.6a1.9 1.9 0 0 0 3.6 0z" fill="#555"/>
<circle cx="1825.4" cy="34.6" r="2.8" fill="#1c9be0"/>
<!-- help -->
<circle cx="1854" cy="39" r="8" fill="#555"/>
<!-- avatar -->
<circle cx="1895" cy="39" r="12.3" fill="#efefef"/>
</svg><div class="t" style="left:1850.03px;top:32.70px;font-size:13px;color:#e8e8e8;font-weight:bold;">?</div>
<div class="t" style="left:1698.50px;top:33.20px;font-size:12px;transform:scaleX(0.8992);color:#3c3c3c;">10 of 10</div>
<div class="t" style="left:1782.50px;top:33.20px;font-size:12px;color:#3c3c3c;">1</div>
<div class="t" style="left:1887.01px;top:33.55px;font-size:11.5px;color:#3c3c3c;">AU</div>

<div class="abs" style="left:12px;top:66px;width:110px;height:60px;border:1px solid #d9d9d9;border-radius:5px;background:#f2f2f2"></div>
<div class="t" style="left:42.50px;top:90.50px;font-size:11px;transform:scaleX(0.8891);color:#333;font-weight:bold;">DESIGN</div>

<div class="dd" style="left:84.5px;top:94px"></div>
<div class="t" style="left:151.20px;top:60.50px;font-size:11px;transform:scaleX(0.9282);color:#0696d7;font-weight:bold;">SOLID</div>

<div class="t" style="left:228.00px;top:60.50px;font-size:11px;transform:scaleX(0.9046);color:#3c3c3c;">SURFACE</div>

<div class="t" style="left:321.00px;top:60.50px;font-size:11px;transform:scaleX(0.8653);color:#3c3c3c;">MESH</div>

<div class="t" style="left:394.30px;top:60.50px;font-size:11px;transform:scaleX(0.8953);color:#3c3c3c;">SHEET METAL</div>

<div class="t" style="left:507.00px;top:60.50px;font-size:11px;transform:scaleX(0.9160);color:#3c3c3c;">PLASTIC</div>

<div class="t" style="left:595.00px;top:60.50px;font-size:11px;transform:scaleX(0.8569);color:#3c3c3c;">UTILITIES</div>

<div class="abs" style="left:138.5px;top:76.6px;width:56px;height:2.8px;background:#0696d7"></div>
<div class="t" style="left:235.50px;top:121.90px;font-size:11px;transform:scaleX(0.8675);color:#3c3c3c;">CREATE</div>

<div class="dd" style="left:277.3px;top:124.3px;border-left-width:3px;border-right-width:3px;border-top-width:4px"></div>
<div class="t" style="left:503.30px;top:121.90px;font-size:11px;transform:scaleX(0.8883);color:#3c3c3c;">MODIFY</div>

<div class="dd" style="left:545.0px;top:124.3px;border-left-width:3px;border-right-width:3px;border-top-width:4px"></div>
<div class="t" style="left:679.60px;top:121.90px;font-size:11px;transform:scaleX(0.9140);color:#3c3c3c;">ASSEMBLE</div>

<div class="dd" style="left:737.0px;top:124.3px;border-left-width:3px;border-right-width:3px;border-top-width:4px"></div>
<div class="t" style="left:774.50px;top:121.90px;font-size:11px;transform:scaleX(0.8863);color:#3c3c3c;">CONSTRUCT</div>

<div class="dd" style="left:839.0px;top:124.3px;border-left-width:3px;border-right-width:3px;border-top-width:4px"></div>
<div class="t" style="left:873.00px;top:121.90px;font-size:11px;transform:scaleX(0.8600);color:#3c3c3c;">INSPECT</div>

<div class="dd" style="left:917.4px;top:124.3px;border-left-width:3px;border-right-width:3px;border-top-width:4px"></div>
<div class="t" style="left:952.00px;top:121.90px;font-size:11px;transform:scaleX(0.8719);color:#3c3c3c;">INSERT</div>

<div class="dd" style="left:990.5px;top:124.3px;border-left-width:3px;border-right-width:3px;border-top-width:4px"></div>
<div class="t" style="left:1021.50px;top:121.90px;font-size:11px;transform:scaleX(0.8716);color:#3c3c3c;">SELECT</div>

<div class="dd" style="left:1062.0px;top:124.3px;border-left-width:3px;border-right-width:3px;border-top-width:4px"></div>
<div class="sep" style="left:393.9px"></div>
<div class="sep" style="left:662.5px"></div>
<div class="sep" style="left:759.3px"></div>
<div class="sep" style="left:858.2px"></div>
<div class="sep" style="left:937.3px"></div>
<div class="sep" style="left:1006.3px"></div>
<svg width="1920" height="82" viewBox="0 55 1920 82" style="left:0;top:55px">
<defs>
<linearGradient id="gv" x1="0" y1="0" x2="0" y2="1"><stop offset="0" stop-color="#e4e4e4"/><stop offset="1" stop-color="#cfcfcf"/></linearGradient>
</defs>
<g stroke="#555" stroke-width="1" fill="none">
<path d="M141.5 84h21M139 86.5v21M141.5 110.5h14M165.5 86.5v15"/>
<path d="M148.5 90.5h8M146 93.5v7"/>
<path d="M159.5 92.5c-.5 6-4.5 10.5-11 11.5" stroke-width="1.2"/>
</g>
<g fill="#555"><rect x="137.5" y="82.5" width="3" height="3"/><rect x="164" y="82.5" width="3" height="3"/><rect x="137.5" y="109" width="3" height="3"/>
<rect x="144.5" y="89" width="3" height="3"/><rect x="158" y="89" width="3" height="3"/><rect x="144.5" y="102.5" width="3" height="3"/></g>
<path d="M160 100.3h4v4.5h4.7v4h-4.7v4.7h-4v-4.7h-4.7v-4h4.7z" fill="#2ba54a"/>
<path d="M181.3 108.4h18.3l4.9-4.9v4.6l-4.9 5.3h-18.3z" fill="#a9a9a9"/><path d="M181.3 108.4h18.3v5h-18.3z" fill="#c4c4c4"/>
<path d="M181.3 89.5h18.3v18.9h-18.3z" fill="#6aaee4"/>
<path d="M181.3 89.5l4.9-7.1h18.3l-4.9 7.1z" fill="#86c1f0"/>
<path d="M199.6 89.5l4.9-7.1v21.1l-4.9 4.9z" fill="#458fca"/>
<path d="M208.8 107.7V85" stroke="#222" stroke-width="1.2"/><path d="M206.3 88.2l2.5-5 2.5 5z" fill="#222"/>
<path d="M223.3 96.5c8-7 22-7.5 31.5-1.8l-.2 10.3c-9-4.6-18-4-25.2 1.6l-6.1-3.6z" fill="#6aaee4"/>
<path d="M223.3 96.5c8-7 22-7.5 31.5-1.8l-5.6 4.3c-7.5-3-14.5-2.2-20 1.6z" fill="#8ecbf7"/>
<path d="M223.3 96.5l5.9 4.1.2 10-6.1-4z" fill="#458fca"/>
<path d="M249.3 99.2l5.5-4.5v10.3l-5.5 5z" fill="#fff" stroke="#555" stroke-width="1"/>
<path d="M226 88.5c8-5.5 19-5.5 27 0.5" stroke="#333" stroke-width="1.1" fill="none"/><path d="M223.6 90.3l5-3.4-.3 4.4z" fill="#222"/>
<path d="M266.2 90.5l6.6-8h25l-6.8 8z" fill="#e9e9e9" stroke="#666" stroke-width="1"/>
<path d="M291 90.5l6.8-8v24.2l-6.8 6.8z" fill="#bcbcbc" stroke="#666" stroke-width="1"/>
<rect x="266.2" y="90.5" width="24.8" height="23" fill="#dedede" stroke="#666" stroke-width="1"/>
<circle cx="277.8" cy="101.8" r="8.6" fill="#f4f4f4" stroke="#666" stroke-width="1"/>
<path d="M277.8 94.4a7.4 7.4 0 1 0 7.3 8.6c-4.300 1.2-8.5-3-7.3-8.600z" fill="#5ea6df"/>
<path d="M312 87.5h16M312 108.3h16M312.3 91v14" stroke="#555" stroke-width="1.1" fill="none"/>
<rect x="309.3" y="84.5" width="6" height="6" fill="#fff" stroke="#555" stroke-width="1"/>
<rect x="330.500" y="84" width="7" height="7" fill="#5ea6df"/><rect x="309" y="105" width="7" height="7" fill="#5ea6df"/><rect x="330.500" y="105" width="7" height="7" fill="#5ea6df"/>
<path d="M361 83.900h8.700l6 3 6.300 9.700v8.300l-9.600 8.800h-15.200c-3.200 0-5.200-2-5.200-5.200v-15c0-5.600 3.400-9.600 9-9.600z" fill="#dcc8f8" stroke="#8f62c8" stroke-width="1"/>
<path d="M354.300 91c1.200-4 3.600-6.500 7-6.500h8.200l-3.700 6.500z" fill="#c89cff"/><path d="M362.500 91l2.700-6.300" stroke="#9a72d2" stroke-width=".8"/>
<path d="M375.400 100.200l6.300-3.700v8.200l-6.300 5.800z" fill="#8a60cc"/><path d="M378.400 98.500v9.200" stroke="#7a50bb" stroke-width=".8"/>
<rect x="353.900" y="92.800" width="20" height="18.500" rx="4.200" fill="#ad80e8"/>
<path d="M353 102h21.500M362.400 91.500v21.500" stroke="#8f62c8" stroke-width=".9" fill="none"/>
<path d="M375.60 82.40 L376.79 87.54 L381.26 84.74 L378.46 89.21 L383.60 90.40 L378.46 91.59 L381.26 96.06 L376.79 93.26 L375.60 98.40 L374.41 93.26 L369.94 96.06 L372.74 91.59 L367.60 90.40 L372.74 89.21 L369.94 84.74 L374.41 87.54Z" fill="#ffa800" stroke="#f2f2f2" stroke-width=".6"/>
<path d="M407.300 90.500l6-8h6l-6 8v23h-6z" fill="#e3e3e3" stroke="#666" stroke-width="1"/>
<path d="M414.300 90.500l6-8h8.500l-5.800 8z" fill="#86c1f0"/><path d="M414.300 90.500h8.700v23h-8.700z" fill="#6aaee4"/><path d="M423 90.500l5.800-8v24l-5.800 7z" fill="#458fca"/>
<path d="M426.500 97.300h8" stroke="#222" stroke-width="1.2"/><path d="M432.500 94.700l4.200 2.600-4.200 2.600z" fill="#222"/><path d="M426.500 96.300h4" stroke="#fff" stroke-width="1"/>
<path d="M449.500 113.500v-22l9-9h6c9 0 16.500 6.500 16.500 15v8.500l-7.500 7.500z" fill="#dcdcdc" stroke="#666" stroke-width="1"/>
<path d="M473.500 113.500v-10l7.500-6v8.500z" fill="#b9b9b9" stroke="#666" stroke-width="1"/>
<path d="M461 86.500l4-4c9 0 16 6.500 16 14.500l-7.500 5.500c0-9-5-15-12.500-16z" fill="#5ea6df"/>
<path d="M492.500 90.500l7.500-8h24l-7.500 8z" fill="#eaeaea" stroke="#666" stroke-width="1"/>
<path d="M516.500 90.500l7.500-8v23.500l-7.500 7.500z" fill="#bcbcbc" stroke="#666" stroke-width="1"/>
<rect x="492.500" y="90.500" width="24" height="23" fill="#dedede" stroke="#666" stroke-width="1"/>
<rect x="496" y="94" width="17" height="16" fill="#f0f0f0"/>
<path d="M496 94h7.500v8.500h9.500v7.500h-17z" fill="#8ecbf7"/><path d="M496 94h7.500v8.500l-6 7.500h-1.500z" fill="#458fca"/>
<path d="M535.200 96.100h9.800v-10h18v17.500h-10v10.100h-17.800z" fill="#6aafe6"/>
<path d="M545 86.100l4.100-4h17.800l-3.900 4zM535.200 96.100l4.100-4h5.700v4z" fill="#8ccbfb"/>
<path d="M563 86.100l3.900-4v17.400l-3.900 4.100zM553 103.600h3.900v6.100l-3.900 4z" fill="#4894d0"/>
<path d="M535.200 96.100h9.800v-10h18" stroke="#5a9fd8" stroke-width=".6" fill="none"/>
<path d="M580 104h22.500l5.500-5v9l-5.500 5.500h-22.500z" fill="#dcdcdc" stroke="#777" stroke-width=".8"/><path d="M602.500 104l5.500-5v9l-5.500 5.500z" fill="#bcbcbc"/>
<path d="M580 88h22.500v10.500h-22.500z" fill="#6aaee4"/><path d="M580 88l5-5.500h23l-5.500 5.500z" fill="#86c1f0"/><path d="M602.500 88l5.500-5.500v10l-5.500 6z" fill="#458fca"/>
<path d="M578 100.800h24.500l7.500-7.500" stroke="#1c8ee0" stroke-width="1.300" fill="none"/>
<path d="M637 86v24M625 98h24" stroke="#333" stroke-width="1.800"/>
<path d="M637 82.500l4.500 6.500h-9zM637 113.500l4.500-6.500h-9zM621.500 98l6.500-4.500v9zM652.500 98l-6.500-4.500v9z" fill="#333"/>
<path d="M675 101h12.500v12.500h-12.500zM688.300 101h12v12.500h-12z" fill="#dcdcdc" stroke="#777" stroke-width=".9"/>
<path d="M688.300 101l3.500-3.500h11l-2.500 3.500zM700.300 101l2.500-3.500v12l-2.500 4z" fill="#c2c2c2" stroke="#777" stroke-width=".8"/>
<path d="M675 89.500h12.500v11.500h-12.500z" fill="#6aaee4"/><path d="M675 89.500l3.500-3.500h12.500l-3.500 3.500z" fill="#86c1f0"/><path d="M687.500 89.500l3.500-3.500v11l-3.500 4z" fill="#458fca"/>
<path d="M698.500 82.500l1.700 5.200 4.400-3.300-1.600 5.200 5.500.2-4.500 3.100 4.500 3.100-5.500.2 1.600 5.200-4.400-3.300-1.700 5.200-1.700-5.200-4.400 3.300 1.600-5.200-5.500-.2 4.500-3.100-4.500-3.100 5.500-.2-1.600-5.200 4.400 3.300z" fill="#f59a0c"/>
<path d="M720.300 110.800v-21l7-5.300c2-1.300 5-.5 5 2v8.500c0 1.500-1.500 2.500-4 2.500v7z" fill="#d4d4d4" stroke="#777" stroke-width="1"/>
<path d="M727.500 84.500c2.500-1 5 0 4.800 2.500l0 8.500c0 1.700-2.300 2.300-4.800 2z" fill="#e8e8e8" stroke="#777" stroke-width=".8"/>
<path d="M741 86.500l7.300 7v17.500l-7.300-6z" fill="#d4d4d4" stroke="#777" stroke-width="1"/>
<path d="M735.300 96.500c0-1.500 5.500-1.500 5.500 0v8.500c0 1.500-5.500 1.500-5.500 0z" fill="#cfcfcf" stroke="#777" stroke-width="1"/>
<path d="M729.500 97.500v5M739 90.500v5.500" stroke="#1c8ee0" stroke-width="1.200"/>
<path d="M795.500 112.500v-21l8.500-8.500h7l-7.500 8.500v21z" fill="#e3e3e3" stroke="#666" stroke-width="1"/>
<path d="M804 91.500l9-9.500v21.500l-9 9.500z" fill="#57c47d"/>
<path d="M816 92l9-9.500v21l-9 9.500z" fill="#e59a63"/>
<path d="M885.300 90v9M912.800 90v9M887 94.500h24" stroke="#555" stroke-width="1.100" fill="none"/>
<path d="M885.800 94.500l4-2.300v4.600zM912.300 94.500l-4-2.300v4.600z" fill="#555"/>
<rect x="884.800" y="100" width="28.400" height="6" fill="#f5a30c"/>
<path d="M888.500 100v2.500M892 100v2.500M895.500 100v2.500M899 100v2.500M902.500 100v2.500M906 100v2.500M909.500 100v2.500" stroke="#b36e00" stroke-width=".9"/>
<rect x="958" y="83" width="29" height="29" fill="#87cbfa"/><rect x="958.400" y="83.400" width="28.200" height="28.200" fill="none" stroke="#4b97d1" stroke-width=".8"/>
<path d="M958 112v-12.500c3-4.500 5.500-5 8.500-3.500s5 5.500 8 8.500c2.500-3 5-4.500 7-3.500s3.500 2.500 5.500 6v5z" fill="#3f8fcb"/>
<circle cx="978.800" cy="91" r="3.100" fill="#fdf6c0"/>
<rect x="1026" y="79" width="38" height="38" fill="#0696d7"/>
<path d="M1032.800 85.300l2.200-1h15.100l9.300 9.300-18.200.2z" fill="#5cc87e"/><path d="M1042.100 84.700l8 8.900" stroke="#3c9a5a" stroke-width=".9"/>
<path d="M1032.800 86l8 8c-1.500.7-2.200 1.700-2.200 3.100v13.300l-9.200-9.300v-11.100c0-2.500 1.400-4 3.400-4z" fill="#f4f4f4" stroke="#5a4a42" stroke-width="1" stroke-linejoin="round"/>
<path d="M1029.700 92.700l8.600 8" stroke="#5a4a42" stroke-width="1"/>
<path d="M1060.300 98l-6.200 6" stroke="#8a8a8a" stroke-width="2.500" stroke-linecap="butt"/>
<path d="M1051.400 104.200l2.700 2.700c.6 2-1 3.400-3.500 4-2.300.6-4.800.9-7.200.9 1.300-1.400 2.500-2.800 3.600-4 1.200-1.500 2.600-3 4.400-3.600z" fill="#a2692a"/>
</svg>
<div class="abs" style="left:4px;top:141px;width:300px;height:25px;background:#f2f2f2;border:1px solid #cfcfcf"></div>
<div class="t" style="left:29.30px;top:147.70px;font-size:11px;transform:scaleX(0.9149);color:#444;">BROWSER</div>

<svg width="310" height="24" viewBox="0 141 310 24" style="left:0;top:141px">
<path d="M13.500 149.800v6.800l-4.600-3.400zM18.800 149.800v6.800l-4.600-3.400z" fill="#222"/>
<circle cx="287.300" cy="153.300" r="4.300" fill="#222"/><rect x="284.700" y="152.600" width="5.200" height="1.400" fill="#f2f2f2"/>
<path d="M299.500 148v10.500M301.500 150v6.500" stroke="#555" stroke-width="1" fill="none"/>
</svg>
<div class="rowbg" style="left:40.4px;top:171.5px;width:147.0px"></div>
<div class="rowbg" style="left:58.3px;top:195.5px;width:133.5px"></div>
<div class="rowbg" style="left:58.3px;top:219.5px;width:109.5px"></div>
<div class="rowbg" style="left:58.3px;top:243.5px;width:94.5px"></div>
<div class="rowbg" style="left:58.3px;top:267.5px;width:102.0px"></div>
<div class="rowbg" style="left:76.0px;top:291.5px;width:91.0px"></div>
<div class="rowbg" style="left:76.0px;top:315.5px;width:91.0px"></div>
<div class="abs" style="left:65px;top:173.300px;width:98px;height:15.400px;background:#979797"></div>
<svg width="320" height="220" viewBox="0 165 320 220" style="left:0;top:165px">
<defs>
<linearGradient id="trg" x1="0" y1="0" x2="1" y2="1"><stop offset="0" stop-color="#ddd"/><stop offset="1" stop-color="#555"/></linearGradient>
<linearGradient id="cylg" x1="0" y1="0" x2="1" y2="0"><stop offset="0" stop-color="#fff"/><stop offset=".5" stop-color="#e9e9ee"/><stop offset="1" stop-color="#c9c9d2"/></linearGradient>
<g id="eye"><path d="M0 0c2.300-3.600 5-5 7.800-5s5.500 1.400 7.800 5c-2.300 3.600-5 5-7.800 5s-5.500-1.400-7.800-5z" fill="#9b9b9b"/><circle cx="7.800" cy="0" r="2.900" fill="#f0f0f0"/><circle cx="7.800" cy="0" r="1.500" fill="#9b9b9b"/></g>
<g id="eyeoff"><path d="M0 0c2.300-3.600 5-5 7.800-5s5.500 1.400 7.800 5c-2.300 3.600-5 5-7.800 5s-5.500-1.400-7.800-5z" fill="none" stroke="#9b9b9b" stroke-width="1"/><circle cx="7.800" cy="0" r="2.500" fill="none" stroke="#9b9b9b" stroke-width="1"/><path d="M3.200 -5.200l9.600 10.600" stroke="#8a8a8a" stroke-width="1.100"/></g>
<g id="folder"><path d="M0 -6.200h6.200l1 1.700h8.500v10.700h-15.700z" fill="#9b9b9b"/><path d="M0 -3.100h15.700" stroke="#f0f0f0" stroke-width=".9"/></g>
<g id="tri-c"><path d="M0.700 -6v12l7.600-6z" fill="#e9e9ec" stroke="#333" stroke-width="1.200" stroke-linejoin="round"/></g>
<g id="tri-e"><path d="M10 -5.800v11h-10.500z" fill="url(#trg)" stroke="#333" stroke-width="1" stroke-linejoin="round"/></g>
<g id="body"><rect x="0.500" y="-7.500" width="15" height="15" rx="3.500" fill="#fff" stroke="#444" stroke-width="1.100"/><path d="M3.300 -3c0-2 9.400-2 9.400 0v8.500h-9.400z" fill="url(#cylg)"/><ellipse cx="8" cy="-3" rx="4.700" ry="1.500" fill="#fff" stroke="#b8b8c4" stroke-width=".5"/></g>
</defs>
<use href="#tri-e" x="21.500" y="181.300"/>
<use href="#eye" x="43.500" y="181.300"/>
<path d="M68.800 177.300l3.200-3.600h11l-3 3.600zM80 177.300l3-3.600v11l-3 3.600z" fill="#f6f6fa" stroke="#444" stroke-width="1" stroke-linejoin="round"/><rect x="68.800" y="177.300" width="11.200" height="11" rx="1" fill="#e4e6ee" stroke="#444" stroke-width="1"/>
<circle cx="173.200" cy="181.300" r="6" fill="#fff" stroke="#222" stroke-width="1"/><circle cx="173.200" cy="181.300" r="2.300" fill="#222"/>
<use href="#tri-c" x="40.300" y="205.300"/><use href="#tri-c" x="40.300" y="229.300"/><use href="#tri-c" x="40.300" y="253.300"/>
<use href="#tri-e" x="39.300" y="277.300"/>
<path d="M76.79 204.00 L76.79 206.60 L74.63 206.70 L73.97 208.29 L75.43 209.89 L73.59 211.73 L71.99 210.27 L70.40 210.93 L70.30 213.09 L67.70 213.09 L67.60 210.93 L66.01 210.27 L64.41 211.73 L62.57 209.89 L64.03 208.29 L63.37 206.70 L61.21 206.60 L61.21 204.00 L63.37 203.90 L64.03 202.31 L62.57 200.71 L64.41 198.87 L66.01 200.33 L67.60 199.67 L67.70 197.51 L70.30 197.51 L70.40 199.67 L71.99 200.33 L73.59 198.87 L75.43 200.71 L73.97 202.31 L74.63 203.90 Z" fill="#9b9b9b"/><circle cx="69" cy="205.3" r="2.6" fill="#f0f0f0"/>
<use href="#folder" x="61.200" y="229.600"/>
<use href="#eyeoff" x="61.200" y="253.300"/><use href="#folder" x="86" y="253.600"/>
<use href="#eye" x="61.200" y="277.300"/><use href="#folder" x="86" y="277.600"/>
<use href="#eyeoff" x="79.200" y="301.300"/><use href="#body" x="103.800" y="301.300"/>
<use href="#eye" x="79.200" y="325.300"/><use href="#body" x="103.800" y="325.300"/>
<path d="M82.500 283.600h76" stroke="#5f7fb0" stroke-width="2.200" stroke-dasharray="2.400 2.600" transform="skewX(-35)" transform-origin="82.500 283.600"/>
<path d="M101 330.800h63" stroke="#5f7fb0" stroke-width="2.200" stroke-dasharray="2.400 2.600" transform="skewX(-35)" transform-origin="101 330.800"/>
</svg>
<div class="t" style="left:98.00px;top:175.80px;font-size:11px;transform:scaleX(1.0304);color:#fff;font-weight:bold;">(Unsaved)</div>

<div class="t" style="left:91.00px;top:199.80px;font-size:11px;transform:scaleX(0.9630);color:#222;">Document Settings</div>

<div class="t" style="left:91.70px;top:223.80px;font-size:11px;transform:scaleX(0.9931);color:#222;">Named Views</div>

<div class="t" style="left:116.30px;top:247.80px;font-size:11px;transform:scaleX(0.9269);color:#222;">Origin</div>

<div class="t" style="left:116.30px;top:271.80px;font-size:11px;transform:scaleX(0.9633);color:#222;">Bodies</div>

<div class="t" style="left:134.30px;top:295.80px;font-size:11px;transform:scaleX(0.9769);color:#222;">Barb</div>

<div class="t" style="left:134.30px;top:319.80px;font-size:11px;transform:scaleX(0.8933);color:#222;">Male</div>

<div class="abs" style="left:753.300px;top:141.400px;width:414px;height:23px;background:#f0f0f0"></div>
<div class="abs" style="left:1032.400px;top:141.400px;width:1px;height:23px;background:#cfcfcf"></div>
<svg width="16" height="18" viewBox="756 144 16 18" style="left:756px;top:144px">
<rect x="758" y="150.800" width="12.400" height="9.200" rx="1.200" fill="#e0242b"/>
<path d="M760.600 151.200v-1.700a3.600 3.600 0 0 1 7.200 0v1.700" stroke="#e0242b" stroke-width="1.900" fill="none"/>
<rect x="763.600" y="154" width="1.300" height="2.800" fill="#f5c0c0"/>
</svg>
<div class="t" style="left:778.50px;top:147.70px;font-size:11px;transform:scaleX(0.9850);color:#222;font-weight:bold;">Read-Only:</div>

<div class="t" style="left:858.00px;top:147.70px;font-size:11px;transform:scaleX(0.9690);color:#222;">Document limit has been reached</div>

<div class="t" style="left:1046.60px;top:147.70px;font-size:11px;transform:scaleX(0.9469);color:#1a78c2;">My Editable Documents</div>

<svg width="120" height="110" viewBox="1800 155 120 110" style="left:1800px;top:155px">
<defs><filter id="vcb" x="-30%" y="-30%" width="160%" height="160%"><feGaussianBlur stdDeviation="3.500"/></filter></defs>
<path d="M1832 212l52 6 2 26-52-4z" fill="#bdbdbd" opacity=".75" filter="url(#vcb)"/>
<path d="M1838.300 165.500L1884.900 170.600L1878.300 203.500L1825.100 195.200Z" fill="#ededed" fill-opacity=".88" stroke="#888" stroke-width=".8" stroke-dasharray="5 2.500"/>
<path d="M1878.300 203.500L1884.900 170.600L1881.300 206.500L1874.800 237.400Z" fill="#e2e2e2" fill-opacity=".88" stroke="#888" stroke-width=".8" stroke-dasharray="4 2.500"/>
<path d="M1825.100 195.200L1878.300 203.500L1874.800 237.400L1828.600 230.400Z" fill="#ebebeb" fill-opacity=".88" stroke="#888" stroke-width=".8" stroke-dasharray="5 2.500"/>
<path d="M1828.600 230.400L1874.800 237.400" stroke="#ebebeb" stroke-width="1.500"/>
<path d="M1823.300 189.900L1828.600 230.400" stroke="#3b3bf2" stroke-width="2.200" stroke-linecap="round"/>
<path d="M1828.600 230.600L1883.100 240" stroke="#f29494" stroke-width="1.800" stroke-linecap="round"/>
<text x="1846.500" y="187.800" font-family="Liberation Sans, Arial, sans-serif" font-size="9" font-weight="bold" fill="#9a9da4" transform="matrix(1 .11 -.22 1 40.700 -206.200)" letter-spacing=".900">TOP</text>
<text x="1834" y="218.600" font-family="Liberation Sans, Arial, sans-serif" font-size="9.300" font-weight="bold" fill="#9a9da4" transform="matrix(1 .145 .04 1 -8.700 -265.900)" letter-spacing=".600">FRONT</text>
<text x="1817.300" y="187.300" font-family="Liberation Sans, Arial, sans-serif" font-size="12.500" font-weight="bold" fill="#8080ff">Z</text>
<text x="1885.300" y="245.300" font-family="Liberation Sans, Arial, sans-serif" font-size="12.500" font-weight="bold" fill="#ff9494">X</text>
</svg>
<div class="abs" style="left:841.600px;top:954.500px;width:236px;height:23.300px;background:#f0f0f0"></div>
<svg width="240" height="24" viewBox="840 954 240 24" style="left:840px;top:954px">
<path d="M852 957.500v15" stroke="#222" stroke-width="2.600"/><path d="M852 958v14" stroke="#f0f0f0" stroke-width="1"/>
<path d="M848.700 960.300l3.300-4 3.300 4" fill="none" stroke="#222" stroke-width="1"/>
<path d="M857 962.500c3.500 1.500 2.500 4.500-5 5-3 .2-5.500-.3-6.500-1" stroke="#222" stroke-width="1.300" fill="none"/><path d="M844.200 965.800l4.200-2.200-.6 4.600z" fill="#222"/>
<path d="M865.0 963.8h5.800l-2.900 3.600z" fill="#222"/>
<path d="M877.500 961.500l6-3 1.500 2 4-2.500 1 3h2.500v12.500h-15z" fill="#dcdcdc" stroke="#444" stroke-width="1"/><rect x="880.500" y="965.500" width="9" height="5" fill="#9aa0b0" stroke="#444" stroke-width=".9"/>
<path d="M906.500 966.500l-2-2.300c-.8-1 .6-2.200 1.600-1.300l2.200 2v-6.200c0-1.300 1.900-1.300 1.900 0v-1.200c0-1.300 2-1.300 2 0v1c0-1.300 2-1.300 2 0v1.500c0-1.200 1.900-1.200 1.900 0v7.500c0 3-1.500 5.500-4.800 5.500-2.400 0-3.600-1-4.800-2.800z" fill="#fff" stroke="#333" stroke-width=".9"/><path d="M910.200 959v5.500M912.200 958.500v6M914.200 959.500v5" stroke="#333" stroke-width=".7" fill="none"/>
<circle cx="934.500" cy="964.500" r="5" fill="#d6e4ec" stroke="#444" stroke-width="1.200"/><path d="M938 968.500l4 4" stroke="#333" stroke-width="2.200" stroke-linecap="round"/>
<path d="M943 957.500v5M940.500 960h5M940.500 964.500h5" stroke="#222" stroke-width="1.100"/>
<rect x="955.500" y="958" width="14.500" height="14.500" fill="none" stroke="#333" stroke-width="1" stroke-dasharray="2.500 1.500"/>
<circle cx="962" cy="964.300" r="6.300" fill="#dfe9ee" stroke="#444" stroke-width="1.200"/><path d="M966.500 969.300l4 3.800" stroke="#333" stroke-width="2.400" stroke-linecap="round"/>
<path d="M976.0 963.8h5.800l-2.900 3.600z" fill="#222"/>
<rect x="988.500" y="958.500" width="15" height="11" rx="1" fill="#8fa9d8" stroke="#444" stroke-width="1.300"/><rect x="990.300" y="960.300" width="11.400" height="7.400" fill="#9db7e6"/><path d="M994 970h4v2.200h2.500v1h-9v-1h2.500z" fill="#555"/>
<path d="M1006.0 963.8h5.800l-2.900 3.600z" fill="#222"/>
<rect x="1019.500" y="958" width="15" height="15" fill="#fff" stroke="#555" stroke-width="1"/><rect x="1019.500" y="965.500" width="15" height="7.500" fill="#b9bcc6"/>
<path d="M1023.250 958v15M1027 958v15M1030.750 958v15M1019.500 961.750h15M1019.500 965.500h15M1019.500 969.250h15" stroke="#666" stroke-width=".9"/>
<path d="M1037.3 963.8h5.800l-2.900 3.600z" fill="#222"/>
<rect x="1050.500" y="958.500" width="14.500" height="13.500" rx="1" fill="#c9d6ee" stroke="#3b5f9d" stroke-width="1.200"/><path d="M1057.750 958.500v13.500M1050.500 965.250h14.500" stroke="#3b5f9d" stroke-width="1.200"/>
<rect x="1052.300" y="960.300" width="3.700" height="3" fill="#8fa9d8"/><rect x="1059.500" y="960.300" width="3.700" height="3" fill="#8fa9d8"/><rect x="1052.300" y="967" width="3.700" height="3" fill="#8fa9d8"/><rect x="1059.500" y="967" width="3.700" height="3" fill="#8fa9d8"/>
<path d="M1068.0 963.8h5.800l-2.900 3.600z" fill="#222"/>
</svg>
<div class="t" style="left:1747.50px;top:960.70px;font-size:11px;transform:scaleX(1.0072);color:#222;font-weight:bold;">1 Face | Area : 196.613 mm^2</div>

<div class="abs" style="left:4px;top:953px;width:300px;height:25px;background:#f2f2f2;border:1px solid #cfcfcf"></div>
<div class="t" style="left:29.30px;top:959.80px;font-size:11px;transform:scaleX(0.8837);color:#444;">COMMENTS</div>

<svg width="30" height="24" viewBox="280 953 30 24" style="left:280px;top:953px">
<circle cx="287.300" cy="965.300" r="4.300" fill="#222"/><path d="M284.700 965.300h5.200M287.300 962.700v5.200" stroke="#f2f2f2" stroke-width="1.300"/>
<path d="M299.500 960v10.500M301.500 962v6.500" stroke="#555" stroke-width="1" fill="none"/></svg>
<div id="timeline" class="abs"></div>
<svg width="1920" height="48" viewBox="0 984 1920 48" style="left:0;top:984px">
<defs>
<g id="tl-cyl"><path d="M0 3.200v9.600c0 1.800 3.600 3.100 8 3.100s8-1.300 8-3.100v-9.600z" fill="#6aaee4"/><ellipse cx="8" cy="3.200" rx="8" ry="3.100" fill="#8ecbf7"/></g>
<g id="tl-ext"><path d="M0 12.600h8.600l3-2.600v1.800l-3 2.700h-8.600z" fill="#b5b5b5"/><path d="M0 3.400h8.600v9.200h-8.600z" fill="#6aaee4"/><path d="M0 3.400l3-3h8.600l-3 3z" fill="#8ecbf7"/><path d="M8.600 3.400l3-3v9.600l-3 2.600z" fill="#458fca"/><path d="M14.200 12.800v-10" stroke="#222" stroke-width="1"/><path d="M12.600 4.200l1.600-3.200 1.600 3.200z" fill="#222"/></g>
<g id="tl-cham"><path d="M0.500 9.500l0-2.500 6.500-6.500h5.500l3.500 4v11h-12z" fill="#dedede" stroke="#666" stroke-width=".9"/><path d="M0.500 9.500l3.500 5.500" stroke="#666" stroke-width=".8"/><path d="M1.200 7.200l6-6.200 4.600 3-6.500 6.400z" fill="#5ea6df"/></g>
<g id="tl-comb"><path d="M0 7.070h4.950v-5.050h9.090v8.840h-5.050v5.100h-8.990z" fill="#6aafe6"/><path d="M4.950 2.020l2.070-2.020h8.980l-1.960 2.020zM0 7.070l2.070-2.020h2.880v2.020z" fill="#8ccbfb"/><path d="M14.040 2.020l1.960-2.020v8.790l-1.960 2.070zM8.990 10.860h1.970v3.080l-1.970 2.020z" fill="#4894d0"/></g>
<g id="tl-coil"><rect x="2.500" y="0.800" width="10.500" height="14.400" fill="#e4e4e4" stroke="#8a8a8a" stroke-width=".9"/><path d="M0.300 6l14.800-3M0.300 9.200l14.800-3M0.300 12.400l14.800-3" stroke="#2b95e8" stroke-width="1.200" fill="none"/></g>
<g id="tl-shell"><path d="M6 2.500l3-2.500h7v10l-3 2z" fill="#3f8fcf"/><rect x="0.600" y="3.600" width="12" height="12" fill="#fff" stroke="#444" stroke-width="1.100"/><rect x="3.200" y="6.200" width="6.800" height="6.800" fill="#fff" stroke="#444" stroke-width="1"/></g>
<g id="tl-fil"><path d="M0.500 15.500v-10l5-5h3c4.500 0 7.500 3.500 7.500 7.500v4.500l-3 3z" fill="#dedede" stroke="#666" stroke-width=".9"/><path d="M13 15.500v-4l3-2.500v3.500z" fill="#b9b9b9"/><path d="M7.500 1.500l1.500-1c4 0 7 3.500 7 7.500l-3 2c0-4.500-2-7.500-5.500-8.500z" fill="#4a9ade"/></g>
</defs>
<g fill="#4a4a4d">
<rect x="11" y="1001" width="1.800" height="13.700"/><path d="M22.900 1001.900v12.500l-9.800-6.250z"/>
<path d="M45 1001.900v12.500l-9.700-6.250z"/><rect x="46" y="1005.300" width="1.900" height="5.600"/>
<path d="M61 1000.300v15.600l11.600-7.800z"/>
<rect x="85" y="1005.300" width="1.900" height="5.600"/><path d="M88.100 1001.900v12.500l9.700-6.250z"/>
<path d="M111 1001.900v12.500l9.700-6.250z"/><rect x="121" y="1001" width="1.900" height="13.700"/>
</g>
<path d="M155 1018v6h287.300v-6" stroke="#c4c4c4" stroke-width="1.500" fill="none"/>
<path d="M178.5 1018v6M202.5 1018v6M226.5 1018v6M250.5 1018v6M274.5 1018v6M298.5 1018v6M322.5 1018v6M346.5 1018v6M370.5 1018v6M394.5 1018v6M418.5 1018v6" stroke="#c4c4c4" stroke-width="1.300" fill="none"/>
<use href="#tl-cyl" x="146" y="999"/>
<use href="#tl-cyl" x="170" y="999"/>
<use href="#tl-ext" x="194" y="999"/>
<use href="#tl-ext" x="218" y="999"/>
<use href="#tl-cham" x="242.2" y="999"/>
<use href="#tl-cham" x="266.2" y="999"/>
<use href="#tl-cham" x="290.2" y="999"/>
<use href="#tl-comb" x="314.2" y="999"/>
<use href="#tl-cyl" x="338.2" y="999"/>
<use href="#tl-coil" x="362.2" y="999"/>
<use href="#tl-shell" x="386.2" y="999"/>
<use href="#tl-shell" x="410.2" y="999"/>
<use href="#tl-fil" x="434.2" y="999"/>
<path d="M338.600 994.300l3.900-3.800M343.800 994.300l3.900-3.800M349 994.300l3.900-3.800" stroke="#3c3c3c" stroke-width="1.900" stroke-linecap="round"/>
<path d="M447.900 993h12.100v2.200l-5.300 6.300v23.500h-1.500v-23.500l-5.300-6.300z" fill="#5a5a5a"/>
<path d="M1906.69 1006.69 L1906.69 1009.31 L1904.53 1009.42 L1903.85 1011.04 L1905.31 1012.65 L1903.45 1014.51 L1901.84 1013.05 L1900.22 1013.73 L1900.11 1015.89 L1897.49 1015.89 L1897.38 1013.73 L1895.76 1013.05 L1894.15 1014.51 L1892.29 1012.65 L1893.75 1011.04 L1893.07 1009.42 L1890.91 1009.31 L1890.91 1006.69 L1893.07 1006.58 L1893.75 1004.96 L1892.29 1003.35 L1894.15 1001.49 L1895.76 1002.95 L1897.38 1002.27 L1897.49 1000.11 L1900.11 1000.11 L1900.22 1002.27 L1901.84 1002.95 L1903.45 1001.49 L1905.31 1003.35 L1903.85 1004.96 L1904.53 1006.58 Z" fill="#9b9b9b"/><circle cx="1898.8" cy="1008" r="2.8" fill="#f2f2f2"/>
</svg>
<div id="taskbar" class="abs"></div>
<svg width="1920" height="48" viewBox="0 1032 1920 48" style="left:0;top:1032px">
<defs>
<linearGradient id="wg" x1="0" y1="0" x2="1" y2="1"><stop offset="0" stop-color="#7fe6ff"/><stop offset="1" stop-color="#1a9cf0"/></linearGradient>
<linearGradient id="tvb" x1="0" y1="0" x2="1" y2="1"><stop offset="0" stop-color="#fdfdfd"/><stop offset="1" stop-color="#cfcfcf"/></linearGradient>
<linearGradient id="tvf" x1="0" y1="0" x2="1" y2="1"><stop offset="0" stop-color="#a9a9a9"/><stop offset="1" stop-color="#6a6a6a"/></linearGradient>
<linearGradient id="tmg" x1="0" y1="0" x2="1" y2="1"><stop offset="0" stop-color="#8b8fe8"/><stop offset="1" stop-color="#5a4fc0"/></linearGradient>
<linearGradient id="fog" x1="0" y1="0" x2="0" y2="1"><stop offset="0" stop-color="#ffd75a"/><stop offset="1" stop-color="#f5b82e"/></linearGradient>
<linearGradient id="edg" x1="0" y1="0" x2="1" y2="1"><stop offset="0" stop-color="#37c6d0"/><stop offset=".5" stop-color="#1f8fdc"/><stop offset="1" stop-color="#0f5fb4"/></linearGradient>
<linearGradient id="edg2" x1="0" y1="0" x2="1" y2="0"><stop offset="0" stop-color="#2fb5e0"/><stop offset="1" stop-color="#62d36a"/></linearGradient>
<linearGradient id="atg" x1="0" y1="0" x2="0" y2="1"><stop offset="0" stop-color="#62c58a"/><stop offset="1" stop-color="#3a9a66"/></linearGradient>
<linearGradient id="f3g" x1="0" y1="0" x2="0" y2="1"><stop offset="0" stop-color="#fbe3cf"/><stop offset="1" stop-color="#fce9d9"/></linearGradient>
</defs>
<g fill="url(#wg)"><rect x="597" y="1045" width="11" height="11"/><rect x="609.400" y="1045" width="11" height="11"/><rect x="597" y="1057.400" width="11" height="10.600"/><rect x="609.400" y="1057.400" width="11" height="10.600"/></g>
<circle cx="654.300" cy="1054.600" r="8.200" fill="#464646" stroke="#eeeeee" stroke-width="2.200"/><path d="M648.300 1060.800l-4.600 5" stroke="#dcdcdc" stroke-width="2.600" stroke-linecap="round"/>
<rect x="691.500" y="1045" width="17.500" height="16.500" rx="1.500" fill="url(#tvb)"/><rect x="685" y="1050.800" width="17.700" height="15.700" rx="1.500" fill="#979797" fill-opacity=".61"/>
<rect x="729" y="1045" width="23.700" height="21.500" rx="2.500" fill="#1667c0"/><rect x="731.300" y="1047.300" width="8.700" height="17" rx="1" fill="#f4f8ff"/><rect x="741.600" y="1047.300" width="8.800" height="9.800" rx="1" fill="#66d6ff"/><rect x="741.600" y="1057.600" width="8.800" height="3.200" fill="#2aa2f5"/><rect x="741.600" y="1061.200" width="8.800" height="3.200" rx=".6" fill="#1787e6"/>
<path d="M772.800 1056a11.400 11.400 0 1 1 5.400 9.700l-5.700 2.300 1.800-5.200a11.300 11.300 0 0 1-1.500-6.800z" fill="url(#tmg)"/><rect x="777.300" y="1051.800" width="9.600" height="8.200" rx="1.600" fill="#fff"/><path d="M787.600 1055l3.600-2.400v6.700l-3.600-2.400z" fill="#fff"/>
<path d="M817.300 1048c0-1.300.9-2.200 2.200-2.200h6l2.200 2.600h11.400c1.300 0 2.200.9 2.200 2.200v13.700c0 1.300-.9 2.200-2.200 2.200h-19.600c-1.300 0-2.200-.9-2.200-2.200z" fill="#e9a520"/><path d="M817.300 1051.200h24v13.100c0 1.300-.9 2.200-2.200 2.200h-19.600c-1.300 0-2.200-.9-2.200-2.200z" fill="url(#fog)"/><path d="M822.500 1066.500v-5.200c0-1.200.8-2 2-2h9.600c1.200 0 2 .8 2 2v5.200z" fill="#1e78d2"/><rect x="825.500" y="1061.800" width="7.600" height="1.800" rx=".9" fill="#5fb0f2"/>
<path d="M861.700 1056.700a10.900 10.900 0 1 1 4.700 9l-5.600 1.700 1.900-5.200a10.800 10.800 0 0 1-1-5.500z" fill="#fff"/><circle cx="872.600" cy="1056.700" r="9.300" fill="#3ec250"/><path d="M868.300 1052.300c.5-1 1.700-1 2.100-.2l.8 1.900c.2.500 0 1-.4 1.300l-.6.600c.8 1.600 2 2.800 3.700 3.600l.7-.7c.4-.4.900-.5 1.400-.2l1.700 1c.7.500.6 1.600-.3 2.100-1.400.8-2.900.6-4.700-.4-2.300-1.300-3.900-3-4.800-5.200-.6-1.500-.4-2.800.4-3.800z" fill="#fff"/>
<circle cx="882.300" cy="1047.700" r="7.600" fill="#fb0d12"/>
<circle cx="917" cy="1056" r="11.800" fill="url(#edg)"/><path d="M905.400 1054.500c.8-6 5.600-10.300 11.700-10.300 6.800 0 11.700 5 11.700 10.600 0 4-2.900 6.400-6.300 6.400-2.500 0-4.600-1.200-4.600-3 0-1 .8-1.500.8-2.800 0-2-1.900-3.700-4.600-3.700-3.500 0-6.500 2.400-8.700 2.800z" fill="url(#edg2)"/><path d="M913 1057.500c0 4.500 3.500 8.500 9 9.300-7 3-15.500-1.300-16.600-9.800 1.500-3.500 4.600-5.300 7.800-5.300 1.500 0 3 .5 3.900 1.500-2.600.3-4.100 2-4.100 4.300z" fill="#0c59a4" opacity=".55"/>
<rect x="949.400" y="1046.700" width="22" height="17.700" rx="1" fill="#0c0c0c" stroke="#9a9a9a" stroke-width="1"/><rect x="949.900" y="1047.200" width="21" height="1.600" fill="#bdbdbd"/>
<rect x="993" y="1044.300" width="23.700" height="23.200" rx="3" fill="#fb7a24"/><path d="M998.300 1050.800c1.800-2 4.300-1.600 5.600.2h2c1.300-1.800 3.800-2.200 5.600-.2 1.500 1.700 1.200 3.700-.3 5 1.500 1.300 1.800 3.300.3 5-1.800 2-4.300 1.600-5.600-.2h-2c-1.300 1.800-3.800 2.200-5.600.2-1.500-1.700-1.200-3.700.3-5-1.500-1.300-1.800-3.300-.3-5z" fill="#fff"/><path d="M1001.500 1053.300l1.800 2.500-1.800 2.500M1008.300 1053.300l-1.800 2.500 1.800 2.500" stroke="#fb7a24" stroke-width="1.600" fill="none"/>
<circle cx="1048.750" cy="1055.400" r="11.500" fill="#fff"/><path d="M1048.750 1055.400l-9.960-5.750a11.500 11.500 0 0 1 19.920 0z" fill="#e33b2e"/><path d="M1048.750 1043.900a11.500 11.500 0 0 1 9.960 5.750h-9.960z" fill="#e33b2e"/><path d="M1058.710 1049.650a11.500 11.500 0 0 1-9.960 17.250l4.980-8.620z" fill="#fbc116"/><path d="M1048.750 1055.400l9.960-5.750a11.500 11.500 0 0 1-9.960 17.250z" fill="#fbc116"/><path d="M1048.750 1066.900a11.500 11.500 0 0 1-9.960-17.250l9.960 5.750z" fill="#2da94f"/><circle cx="1048.750" cy="1055.400" r="5.400" fill="#fff"/><circle cx="1048.750" cy="1055.400" r="4.300" fill="#4a8af4"/>
<circle cx="1093" cy="1055.400" r="11.800" fill="url(#atg)"/><g fill="none" stroke="#f3fff6" stroke-width="1"><ellipse cx="1093" cy="1056" rx="8.300" ry="3.200" transform="rotate(-30 1093 1056)"/><ellipse cx="1093" cy="1056" rx="8.300" ry="3.200" transform="rotate(30 1093 1056)"/><ellipse cx="1093" cy="1056" rx="3.200" ry="8.300"/></g><circle cx="1093" cy="1056" r="1.400" fill="#f3fff6"/>
<path d="M1136.800 1044.200l11.400 5.800v12.800l-11.400 5.800-11.400-5.800v-12.800z" fill="#1c5fd0"/><path d="M1136.800 1044.200l11.400 5.800-11.400 5.800-11.400-5.800z" fill="#2f78e6"/><path d="M1136.800 1055.800v12.800l-11.400-5.800v-12.800z" fill="#1a56c0"/><path d="M1131.100 1047.100l11.400 5.800M1142.500 1047.100l-11.400 5.800M1125.400 1056.400l11.400 5.800 11.400-5.800M1131.100 1052.900v12.800M1142.500 1052.900v12.800" stroke="#0f3f96" stroke-width=".8" fill="none"/><path d="M1136.800 1050l5.700 2.900v6.400l-5.700 2.900-5.700-2.900v-6.400z" fill="#f39a2b"/><path d="M1136.800 1050l5.700 2.900-5.700 2.900-5.700-2.900z" fill="#ffb85a"/>
<circle cx="1180.600" cy="1055.400" r="11.600" fill="#fff"/><g stroke-width="2.600" stroke-linecap="round" fill="none"><path d="M1178.400 1048.800v5" stroke="#36c5f0"/><path d="M1174 1053.200h1.800" stroke="#36c5f0"/><path d="M1187.200 1053.200h-5" stroke="#2eb67d"/><path d="M1182.800 1048.800v1.800" stroke="#2eb67d"/><path d="M1182.800 1062v-5" stroke="#ecb22e"/><path d="M1187.200 1057.600h-1.800" stroke="#ecb22e"/><path d="M1174 1057.600h5" stroke="#e01e5a"/><path d="M1178.400 1062v-1.800" stroke="#e01e5a"/></g>
<path d="M1224.400 1044l10.800 10.300c.8.800.5 1.800-.6 2l-4.200.8 2.400 2.300-3 1.500 1.300 2.300c-2 .6-4 .3-5-1l-2.200 3-2-3c-1.700 1.300-3.800 1.400-5.500.3l2-2.300-3.600-1.500 3-2.500-4.300-.9c-1-.2-1.300-1.200-.6-2z" fill="#0a0a0a"/><path d="M1224.400 1045.800l5.200 5c-1.700.5-2.600 1.800-3.700 1.200l-1.500-1-1.500 1c-1.100.6-2-.7-3.700-1.200z" fill="#f2f2f2"/><path d="M1216 1064.500c1.500.8 3.500.8 4.500-.2M1230 1064c1.500.5 3 .3 4-.5" stroke="#0a0a0a" stroke-width="1.300" fill="none"/>
<rect x="1272" y="1036.200" width="16.800" height="39.600" rx="4.500" fill="#2b2b2b" stroke="#383838" stroke-width=".8"/><rect x="1249.100" y="1036.200" width="35" height="39.600" rx="4.500" fill="#2e2e2e" stroke="#3a3a3a" stroke-width=".8"/>
<rect x="1256.900" y="1043.700" width="24.400" height="24.600" fill="url(#f3g)"/><path d="M1256.900 1060.500c8-3.500 16-4 24.400-2.500v10.300h-24.400z" fill="#fdf4ec" opacity=".8"/>
<path d="M1264.200 1062.300v-13.300c0-1.700.9-2.500 2.600-2.500h8.100v3.700h-5.700c-.6 0-.9.300-.9.900v2.500h5.600v3.500h-5.600v5.200z" fill="#d07a1e"/><path d="M1264.200 1062.300v-13.300c0-1.700.9-2.500 2.600-2.500h1.600c-1.200.2-1.800 1.100-1.800 2.700v13.100z" fill="#b8620f"/><path d="M1268.300 1050.200h6.600v-3.700h-6c-1 .3-1.400 1-1.400 2.200z" fill="#e8952f" opacity=".8"/>
<rect x="1261.100" y="1071.900" width="16" height="3.200" rx="1.600" fill="#4cc2ff"/>
<path d="M1323.61 1053.39 L1323.61 1058.41 L1320.68 1058.79 L1319.30 1061.19 L1320.43 1063.92 L1316.08 1066.43 L1314.28 1064.08 L1311.52 1064.08 L1309.72 1066.43 L1305.37 1063.92 L1306.50 1061.19 L1305.12 1058.79 L1302.19 1058.41 L1302.19 1053.39 L1305.12 1053.01 L1306.50 1050.61 L1305.37 1047.88 L1309.72 1045.37 L1311.52 1047.72 L1314.28 1047.72 L1316.08 1045.37 L1320.43 1047.88 L1319.30 1050.61 L1320.68 1053.01 Z" fill="#8a939e" stroke="#8a939e" stroke-width="2.600" stroke-linejoin="round"/>
<circle cx="1312.900" cy="1055.900" r="6" fill="#f4f6f8"/><circle cx="1312.900" cy="1055.900" r="4.200" fill="#0b62c4"/>
<rect x="826.3" y="1072.300" width="6.200" height="2.600" rx="1.300" fill="#9a9a9a"/>
<rect x="869.6" y="1072.300" width="6.200" height="2.600" rx="1.300" fill="#9a9a9a"/>
<rect x="1045.75" y="1072.300" width="6.200" height="2.600" rx="1.300" fill="#9a9a9a"/>
<rect x="1310.05" y="1072.300" width="6.200" height="2.600" rx="1.300" fill="#9a9a9a"/>
<path d="M1640.300 1059l5.800-5.700 5.800 5.700" stroke="#f0f0f0" stroke-width="1.200" fill="none"/>
<g fill="none" stroke="#f0f0f0" stroke-width="1.100"><path d="M1671.200 1055.800a6.800 6.800 0 0 1 12.300-3.600M1684.600 1056.200a6.800 6.800 0 0 1-12.300 3.600"/><path d="M1684.300 1048.800v3.700h-3.700M1671.500 1063.200v-3.700h3.700"/></g><circle cx="1682" cy="1060" r="4" fill="#fb9d0f"/>
<g fill="none" stroke="#f0f0f0" stroke-width="1.300" stroke-linecap="round"><path d="M1746.300 1052.800a10.600 10.600 0 0 1 14.800 0M1748.700 1055.600a7.200 7.200 0 0 1 10 0M1751.100 1058.300a3.800 3.800 0 0 1 5.200 0"/></g><circle cx="1753.700" cy="1060.600" r="1.200" fill="#f0f0f0"/>
<path d="M1770.500 1053.500h2.700l3.700-3.300v11.600l-3.700-3.300h-2.700z" fill="none" stroke="#f0f0f0" stroke-width="1.100" stroke-linejoin="round"/><path d="M1779 1053.300a3.800 3.800 0 0 1 0 5.400M1781.300 1051.200a6.800 6.800 0 0 1 0 9.600" stroke="#f0f0f0" stroke-width="1.100" fill="none" stroke-linecap="round"/><path d="M1783.600 1049.200a9.700 9.700 0 0 1 0 13.600" stroke="#777" stroke-width="1.100" fill="none" stroke-linecap="round"/>
<rect x="1796.500" y="1052.200" width="11.500" height="8" rx="1.500" fill="none" stroke="#f0f0f0" stroke-width="1.200"/><rect x="1808.600" y="1054.500" width="1.600" height="3.400" rx=".6" fill="#f0f0f0"/><rect x="1798.300" y="1054" width="7" height="4.400" fill="#f0f0f0"/><path d="M1795.300 1050v2.300M1797.600 1050v2.300M1794.500 1052.300h4v2.400a2 2 0 0 1-4 0zM1796.500 1056.500v2" stroke="#f0f0f0" stroke-width="1" fill="#202020"/>
<circle cx="1892" cy="1056.200" r="8" fill="#4cc2ff"/>
</svg>
<div class="t" style="left:878.62px;top:1041.65px;font-size:12.5px;color:#fff;">1</div>

<div class="t" style="left:951.50px;top:1050.35px;font-size:6.5px;color:#eee;font-weight:bold;letter-spacing:.3px;">C:\_</div>

<div class="t" style="left:1269.80px;top:1062.60px;font-size:4px;color:#e39a55;font-weight:bold;">360</div>

<div class="t" style="left:1704.70px;top:1043.30px;font-size:12px;transform:scaleX(0.8768);color:#fff;">ENG</div>

<div class="t" style="left:1708.30px;top:1058.80px;font-size:12px;transform:scaleX(0.8998);color:#fff;">US</div>

<div class="t" style="left:1833.70px;top:1042.10px;font-size:12px;transform:scaleX(0.9532);color:#fff;">8:07 PM</div>

<div class="t" style="left:1825.30px;top:1058.30px;font-size:12px;transform:scaleX(0.9715);color:#fff;">2/11/2022</div>

<div class="t" style="left:1888.94px;top:1050.90px;font-size:11px;color:#111;">7</div>

</body></html>
